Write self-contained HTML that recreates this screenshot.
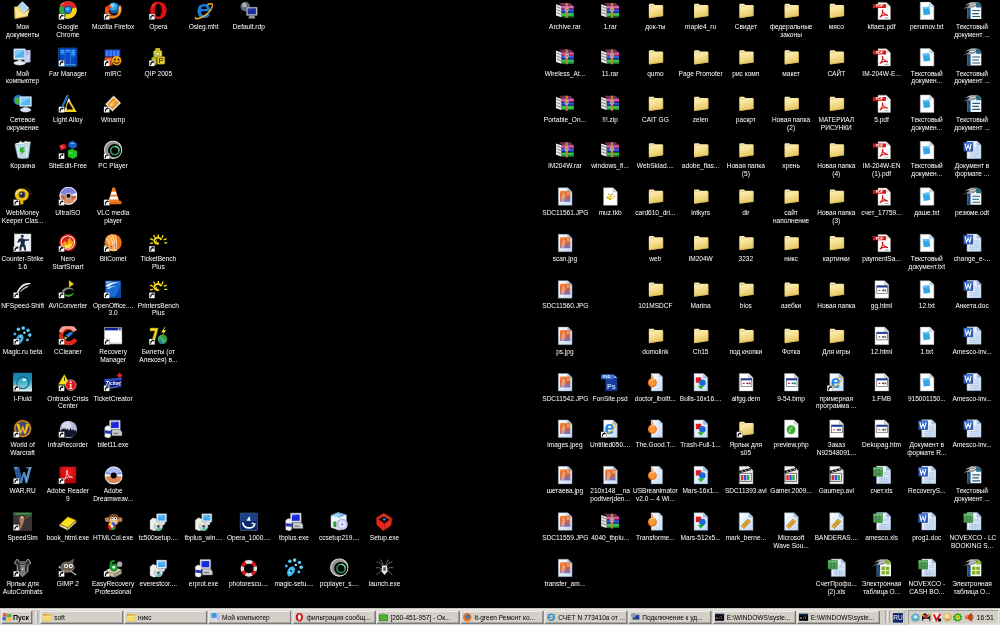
<!DOCTYPE html>
<html><head><meta charset="utf-8"><style>
html,body{margin:0;padding:0;background:#000;width:1000px;height:625px;overflow:hidden}
#d{position:absolute;left:0;top:0;width:1680px;height:1050px;transform:scale(0.595238);transform-origin:0 0;background:#000;font-family:"Liberation Sans",sans-serif}
.ic{position:absolute;display:block}
#labs{position:absolute;left:0;top:0;width:1680px;height:1050px;filter:grayscale(1)}
.lb{position:absolute;width:76px;text-align:center;color:#fff;font-size:11px;line-height:13px;white-space:nowrap}
.bt{position:absolute;top:1026px;height:22px;box-sizing:border-box;background:#d4d0c8;border-top:1px solid #fff;border-left:1px solid #fff;border-right:1px solid #404040;border-bottom:1px solid #404040;box-shadow:inset -1px -1px 0 #808080, inset 1px 1px 0 #e8e6e2;font-size:11px;color:#000;overflow:hidden}
</style></head><body><svg width="0" height="0" style="position:absolute"><defs>
<linearGradient id="gfold" x1="0" y1="0" x2="0.3" y2="1"><stop offset="0" stop-color="#fff4c4"/><stop offset="0.5" stop-color="#f6e296"/><stop offset="1" stop-color="#e6c862"/></linearGradient>
<linearGradient id="gpageb" x1="0" y1="0" x2="1" y2="1"><stop offset="0" stop-color="#ffffff"/><stop offset="1" stop-color="#c4daf4"/></linearGradient>
<linearGradient id="gjpg" x1="0" y1="0" x2="0.2" y2="1"><stop offset="0" stop-color="#f89850"/><stop offset="0.3" stop-color="#e86020"/><stop offset="0.65" stop-color="#d06040"/><stop offset="1" stop-color="#8070b8"/></linearGradient>
<linearGradient id="goo" x1="0" y1="0" x2="1" y2="0"><stop offset="0" stop-color="#1e3a5c"/><stop offset="1" stop-color="#5a7ea8"/></linearGradient>
<linearGradient id="gifl" x1="0" y1="0" x2="0" y2="1"><stop offset="0" stop-color="#1a7ca8"/><stop offset="0.35" stop-color="#1890b8"/><stop offset="0.6" stop-color="#50b8d0"/><stop offset="1" stop-color="#f0f8fc"/></linearGradient>
<radialGradient id="gred" cx="0.5" cy="0.3" r="0.8"><stop offset="0" stop-color="#ff2020"/><stop offset="1" stop-color="#a00000"/></radialGradient>
</defs></svg><div id="d">
<svg class="ic" style="left:22px;top:2px" viewBox="0 0 32 32" width="32" height="32"><path d="M2 9.5L9 8.5l9.5 12L28 12.5l-3.5 13L3 29.5z" fill="#f2d870"/><path d="M4 12l14 10 8-8-3 10L5 27z" fill="#fae890"/><path d="M15.5 0.5L26.7 11.6 18.4 20.5 8.4 8.1z" fill="#c0dcf4" stroke="#e8f4ff" stroke-width="0.8"/><path d="M12 4.5l11 11M10.5 10l8-6.5M14 14.5l8-6.5" stroke="#88b4e0" stroke-width="1"/><path d="M2 9.5L3 29.5 24.5 25.5" fill="none" stroke="#d8a840" stroke-width="1"/></svg>
<svg class="ic" style="left:98px;top:2px" viewBox="0 0 32 32" width="32" height="32"><circle cx="16" cy="14.5" r="14.8" fill="#30a840"/><path d="M16 14.5L3 7A14.8 14.8 0 0 1 30.3 10.5z" fill="#e02828"/><path d="M16 14.5L30.3 10.5A14.8 14.8 0 0 1 11 28.5z" fill="#f8d020"/><path d="M3 7c2-2 4-3 6-3" stroke="#f0a0a0" stroke-width="1.5" fill="none"/><circle cx="16" cy="14.5" r="7" fill="#183060"/><circle cx="16" cy="14.5" r="5.5" fill="#1a88e0"/><circle cx="15.5" cy="13" r="2.5" fill="#50c0ff"/><g><rect x="0.5" y="21.5" width="9.5" height="9.5" fill="#fff" stroke="#606060" stroke-width="0.6"/><path d="M3 29.5c0-3.5 1.5-5.5 4-5.5" stroke="#000" stroke-width="1.8" fill="none"/><path d="M5.8 22.3l3.2 1.5-1.8 2.8z" fill="#000"/></g></svg>
<svg class="ic" style="left:174px;top:2px" viewBox="0 0 32 32" width="32" height="32"><circle cx="18" cy="11.5" r="9.5" fill="#1a5aa8"/><circle cx="16.5" cy="9" r="6.5" fill="#3aa0e0"/><circle cx="15" cy="7" r="3.5" fill="#80d8ff"/><path d="M28 6c3 4 3 10 1 14-3 7-10 10-17 9-6-1-9-5-10-10 3 4 7 6 12 6 7 0 12-4 13-10 0-3 0-6 1-9z" fill="#f08818"/><path d="M27 7c2 3 2 7 1 10-1 3-3 5-5 6 2-3 3-7 2-11z" fill="#f8c040"/><path d="M2 19c0-5 1-9 3-12l1 3c1-3 3-5 6-5l-2 3c2 0 3 1 4 3-3 0-5 2-5 5 0 4 4 7 9 8-6 2-14-1-16-5z" fill="#e84810"/><path d="M4 12c1 4 3 7 7 9" stroke="#f87030" stroke-width="1.5" fill="none"/><g><rect x="0.5" y="21.5" width="9.5" height="9.5" fill="#fff" stroke="#606060" stroke-width="0.6"/><path d="M3 29.5c0-3.5 1.5-5.5 4-5.5" stroke="#000" stroke-width="1.8" fill="none"/><path d="M5.8 22.3l3.2 1.5-1.8 2.8z" fill="#000"/></g></svg>
<svg class="ic" style="left:250px;top:2px" viewBox="0 0 32 32" width="32" height="32"><ellipse cx="16" cy="15.5" rx="14" ry="15" fill="#e01010"/><ellipse cx="16" cy="15.5" rx="6" ry="11.5" fill="#300000"/><ellipse cx="16" cy="15" rx="4" ry="10" fill="#000"/><path d="M6 8c2-5 6-6 7-6-4 2-6 5-6 8z" fill="#ff8080"/><g><rect x="0.5" y="21.5" width="9.5" height="9.5" fill="#fff" stroke="#606060" stroke-width="0.6"/><path d="M3 29.5c0-3.5 1.5-5.5 4-5.5" stroke="#000" stroke-width="1.8" fill="none"/><path d="M5.8 22.3l3.2 1.5-1.8 2.8z" fill="#000"/></g></svg>
<svg class="ic" style="left:326px;top:2px" viewBox="0 0 32 32" width="32" height="32"><text x="16.5" y="29" font-size="44" font-weight="bold" fill="#1a7ad8" text-anchor="middle" font-family="Liberation Sans">e</text><path d="M3 27c-3 3 2 4 10 0 8-4 16-12 18-19 1-4-3-5-9-2" stroke="#e8b020" stroke-width="2.4" fill="none"/></svg>
<svg class="ic" style="left:402px;top:2px" viewBox="0 0 32 32" width="32" height="32"><circle cx="10" cy="9" r="8" fill="#606a78"/><circle cx="8.5" cy="6.5" r="4" fill="#a8b0b8"/><rect x="12" y="10" width="18" height="14" fill="#c0c4c8" stroke="#707880" stroke-width="0.8"/><rect x="14" y="12" width="14" height="10" fill="#1a2c98"/><path d="M15 13l6 0" stroke="#6070d0"/><path d="M17 24h8l2 5H15z" fill="#909aa4"/></svg>
<svg class="ic" style="left:22px;top:80px" viewBox="0 0 32 32" width="32" height="32"><path d="M19 5l10-1v20l-10 2z" fill="#d0d0f0" stroke="#9090c0" stroke-width="0.6"/><path d="M21 8h6M21 11h6" stroke="#8080b0"/><rect x="1" y="2" width="20" height="18" rx="1" fill="#e8f0f8" stroke="#8ab0d0" stroke-width="0.8"/><rect x="3" y="4" width="16" height="13" fill="#50b0f0"/><path d="M3 4h16l-16 11z" fill="#a0d8ff" opacity="0.6"/><path d="M8 20h6l1 3H7z" fill="#c8d0d8"/><ellipse cx="11" cy="26" rx="10" ry="3.5" fill="#e8ecf0" stroke="#a0a8b0" stroke-width="0.6"/></svg>
<svg class="ic" style="left:98px;top:80px" viewBox="0 0 32 32" width="32" height="32"><rect x="0.5" y="0.5" width="31" height="31" fill="#002890" stroke="#30a0e0" stroke-width="1"/><path d="M3 3h7.5v26H3zM12.5 3h7v26h-7zM21.5 3h7.5v26h-7.5z" fill="#0a48c8"/><path d="M3 3h7.5v9H3zM12.5 3h7v6h-7zM21.5 3h7.5v12h-7.5z" fill="#1a70f0"/><path d="M4 5h5M4 8h5M13.5 5h5M22.5 5h5M22.5 8h5M22.5 11h5" stroke="#70d8ff" stroke-width="1.2"/><path d="M3 29h26" stroke="#60c8ff" stroke-width="1.5"/><path d="M11.5 3v26M20.5 3v26" stroke="#40b8ff" stroke-width="1"/><g><rect x="0.5" y="21.5" width="9.5" height="9.5" fill="#fff" stroke="#606060" stroke-width="0.6"/><path d="M3 29.5c0-3.5 1.5-5.5 4-5.5" stroke="#000" stroke-width="1.8" fill="none"/><path d="M5.8 22.3l3.2 1.5-1.8 2.8z" fill="#000"/></g></svg>
<svg class="ic" style="left:174px;top:80px" viewBox="0 0 32 32" width="32" height="32"><path d="M2 3h26v12H2z" fill="#1a50c8"/><path d="M4 5h4v10H4zM10 5h4v10h-4zM16 5h4v10h-4zM22 5h4v10h-4z" fill="#4080ff"/><path d="M2 16h13v14H2z" fill="#e84818"/><path d="M5 19h7v2H5zM7 21h3v8H7z" fill="#ffa060"/><circle cx="22" cy="22" r="8" fill="#f0a010"/><circle cx="19" cy="20" r="1.5" fill="#000"/><circle cx="25" cy="20" r="1.5" fill="#000"/><path d="M17 24c3 3 7 3 10 0" stroke="#000" stroke-width="1.5" fill="none"/><g><rect x="0.5" y="21.5" width="9.5" height="9.5" fill="#fff" stroke="#606060" stroke-width="0.6"/><path d="M3 29.5c0-3.5 1.5-5.5 4-5.5" stroke="#000" stroke-width="1.8" fill="none"/><path d="M5.8 22.3l3.2 1.5-1.8 2.8z" fill="#000"/></g></svg>
<svg class="ic" style="left:250px;top:80px" viewBox="0 0 32 32" width="32" height="32"><rect x="11" y="1" width="8" height="5" fill="#d8d020"/><rect x="8" y="5" width="14" height="11" rx="2" fill="#e8e040" stroke="#808010" stroke-width="0.8"/><circle cx="15" cy="10.5" r="3" fill="#f8f8a0" stroke="#606000"/><rect x="5" y="16" width="8" height="13" fill="#c8c020" stroke="#606010" stroke-width="0.8"/><rect x="14" y="15" width="13" height="13" rx="2" fill="#e8d030" stroke="#706010" stroke-width="0.8"/><path d="M18 18h4a2 2 0 0 1 0 4h-4zM18 18v8" stroke="#503000" stroke-width="1.5" fill="none"/><circle cx="9" cy="13" r="1.5" fill="#40a040"/><g><rect x="0.5" y="21.5" width="9.5" height="9.5" fill="#fff" stroke="#606060" stroke-width="0.6"/><path d="M3 29.5c0-3.5 1.5-5.5 4-5.5" stroke="#000" stroke-width="1.8" fill="none"/><path d="M5.8 22.3l3.2 1.5-1.8 2.8z" fill="#000"/></g></svg>
<svg class="ic" style="left:22px;top:158px" viewBox="0 0 32 32" width="32" height="32"><circle cx="9" cy="10" r="8.5" fill="#2a70c8"/><path d="M3 6c3-2 6 0 8 3 2 4-1 8-4 9-3-1-5-6-4-12z" fill="#40b040"/><path d="M11 3c3 1 5 3 6 6-2 0-4-2-6-6z" fill="#40b040"/><rect x="11" y="4" width="20" height="17" rx="1" fill="#e8f0f8" stroke="#8ab0d0" stroke-width="0.8"/><rect x="13" y="6" width="16" height="13" fill="#50b8f8"/><path d="M13 6h16l-16 10z" fill="#a8e0ff" opacity="0.6"/><path d="M18 21h6v2h-6z" fill="#b0b8c0"/><ellipse cx="21" cy="26.5" rx="9" ry="4" fill="#e0e4f0" stroke="#9098b0" stroke-width="0.8"/></svg>
<svg class="ic" style="left:98px;top:158px" viewBox="0 0 32 32" width="32" height="32"><path d="M14 2l3 0-13 28H1z" fill="#40a8f0"/><path d="M15 2h3l-14 28H1z" fill="#1a70c8"/><path d="M17 7l14 23H9z" fill="#f8d020"/><path d="M17 13l8 13H12z" fill="#000"/><path d="M16 9l2-2 2 4-4 3z" fill="#fff"/><path d="M9 30l4-7h2l-3 7z" fill="#f8f0c0"/><g><rect x="0.5" y="21.5" width="9.5" height="9.5" fill="#fff" stroke="#606060" stroke-width="0.6"/><path d="M3 29.5c0-3.5 1.5-5.5 4-5.5" stroke="#000" stroke-width="1.8" fill="none"/><path d="M5.8 22.3l3.2 1.5-1.8 2.8z" fill="#000"/></g></svg>
<svg class="ic" style="left:174px;top:158px" viewBox="0 0 32 32" width="32" height="32"><path d="M3 17L17 3l12 12-14 14z" fill="#f0f0e8" stroke="#a0a098" stroke-width="0.8"/><path d="M6 17L17 6l9 9-11 11z" fill="#e89020"/><path d="M10 17c4-2 8-5 12-9-2 5-5 7-8 9 3 0 5-1 8-3-3 4-7 6-11 7z" fill="#ffd070"/><g><rect x="0.5" y="21.5" width="9.5" height="9.5" fill="#fff" stroke="#606060" stroke-width="0.6"/><path d="M3 29.5c0-3.5 1.5-5.5 4-5.5" stroke="#000" stroke-width="1.8" fill="none"/><path d="M5.8 22.3l3.2 1.5-1.8 2.8z" fill="#000"/></g></svg>
<svg class="ic" style="left:22px;top:236px" viewBox="0 0 32 32" width="32" height="32"><path d="M3 7l26-3-3 25c-5 2-14 2-18 0z" fill="#c8e8f4" stroke="#88b8d0" stroke-width="0.8" opacity="0.95"/><path d="M4 6l25-3" stroke="#f0f8ff" stroke-width="2.5"/><path d="M9 4l4-3 3 3M17 3l5-2 2 3" fill="#f8f8e8" stroke="#c0c0a0" stroke-width="0.8"/><path d="M12 12h8l-4 5h5l-9 8 3-6h-4z" fill="#20b020"/><path d="M7 10l2 17M24 9l-2 18" stroke="#e8f8ff" stroke-width="1.2"/></svg>
<svg class="ic" style="left:98px;top:236px" viewBox="0 0 32 32" width="32" height="32"><path d="M1 9l9-4 4 7-9 5z" fill="#e01828"/><path d="M5 9l3 3" stroke="#fff" stroke-width="1.3"/><path d="M17 4l7-4 7 5v6l-7 3-7-4z" fill="#1a60d0"/><path d="M21 5h6" stroke="#a0c8ff" stroke-width="1.5"/><path d="M16 17l7-3 9 4v9l-8 4-8-4z" fill="#20c020"/><path d="M18 20l6 2" stroke="#a0ffa0" stroke-width="1"/><g><rect x="0.5" y="21.5" width="9.5" height="9.5" fill="#fff" stroke="#606060" stroke-width="0.6"/><path d="M3 29.5c0-3.5 1.5-5.5 4-5.5" stroke="#000" stroke-width="1.8" fill="none"/><path d="M5.8 22.3l3.2 1.5-1.8 2.8z" fill="#000"/></g></svg>
<svg class="ic" style="left:174px;top:236px" viewBox="0 0 32 32" width="32" height="32"><circle cx="16" cy="15.5" r="14.5" fill="#909090"/><circle cx="16" cy="15.5" r="14.5" fill="none" stroke="#d8d8d8" stroke-width="2"/><circle cx="18.5" cy="17" r="11" fill="#000"/><circle cx="19" cy="17" r="7" fill="none" stroke="#30a060" stroke-width="2.5"/><path d="M19 10a7 7 0 0 1 7 7" stroke="#70e0a0" stroke-width="2" fill="none"/><circle cx="20" cy="18" r="2.5" fill="#000"/><g><rect x="0.5" y="21.5" width="9.5" height="9.5" fill="#fff" stroke="#606060" stroke-width="0.6"/><path d="M3 29.5c0-3.5 1.5-5.5 4-5.5" stroke="#000" stroke-width="1.8" fill="none"/><path d="M5.8 22.3l3.2 1.5-1.8 2.8z" fill="#000"/></g></svg>
<svg class="ic" style="left:22px;top:314px" viewBox="0 0 32 32" width="32" height="32"><path d="M18 4c5 1 9 5 10 10" stroke="#604010" stroke-width="1.5" fill="none"/><path d="M20 1c6 1 10 6 11 12" stroke="#604010" stroke-width="1.2" fill="none"/><path d="M3 13c0-7 6-10 11-10 7 0 12 4 12 10 0 7-5 10-9 10v6h-5v-6c-5-1-9-4-9-10z" fill="#f0c010" stroke="#b08000" stroke-width="0.8"/><path d="M5 12c1-5 5-7 9-7" stroke="#fff0a0" stroke-width="2" fill="none"/><circle cx="15" cy="13" r="5.5" fill="#404050"/><circle cx="15" cy="13" r="3.5" fill="#182030"/><circle cx="13.5" cy="11.5" r="1.5" fill="#e0e8ff"/><g><rect x="0.5" y="21.5" width="9.5" height="9.5" fill="#fff" stroke="#606060" stroke-width="0.6"/><path d="M3 29.5c0-3.5 1.5-5.5 4-5.5" stroke="#000" stroke-width="1.8" fill="none"/><path d="M5.8 22.3l3.2 1.5-1.8 2.8z" fill="#000"/></g></svg>
<svg class="ic" style="left:98px;top:314px" viewBox="0 0 32 32" width="32" height="32"><circle cx="17" cy="15" r="14.5" fill="#f0f0f8"/><path d="M17 15L3 12A14.5 14.5 0 0 1 31 10z" fill="#8080e0"/><path d="M17 15L3 13A14.5 14.5 0 0 0 31 15z" fill="#c86838"/><path d="M17 15L6 23A14.5 14.5 0 0 0 28 24z" fill="#e09060"/><circle cx="17" cy="15" r="14.5" fill="none" stroke="#f0f0ff" stroke-width="1.5"/><circle cx="17" cy="15" r="5" fill="#d0d0d8"/><circle cx="17" cy="15" r="3.5" fill="#000"/><g><rect x="0.5" y="21.5" width="9.5" height="9.5" fill="#fff" stroke="#606060" stroke-width="0.6"/><path d="M3 29.5c0-3.5 1.5-5.5 4-5.5" stroke="#000" stroke-width="1.8" fill="none"/><path d="M5.8 22.3l3.2 1.5-1.8 2.8z" fill="#000"/></g></svg>
<svg class="ic" style="left:174px;top:314px" viewBox="0 0 32 32" width="32" height="32"><path d="M15 1h4l8 24H8z" fill="#f07818"/><path d="M13.5 8h7l1.7 5H11.8zM11 16h12l1.6 5H9.4z" fill="#fff"/><path d="M4 24h26v5H4z" fill="#e86810"/><path d="M4 24h26" stroke="#ffa060" stroke-width="1"/><g><rect x="0.5" y="21.5" width="9.5" height="9.5" fill="#fff" stroke="#606060" stroke-width="0.6"/><path d="M3 29.5c0-3.5 1.5-5.5 4-5.5" stroke="#000" stroke-width="1.8" fill="none"/><path d="M5.8 22.3l3.2 1.5-1.8 2.8z" fill="#000"/></g></svg>
<svg class="ic" style="left:22px;top:392px" viewBox="0 0 32 32" width="32" height="32"><rect x="2" y="1" width="28" height="29" fill="#e8eaee" stroke="#b0b4b8" stroke-width="0.8"/><rect x="2" y="1" width="28" height="29" fill="#fff" opacity="0.3"/><path d="M13 5a2.5 2.5 0 1 1 0 .1zM10 9l5-1 4 2h8v2l-7 1-1 5 2 3 1 8h-3l-2-7-3 2v5h-3v-7l2-5-1-4-3 3-2-1z" fill="#1a2848"/><g><rect x="0.5" y="21.5" width="9.5" height="9.5" fill="#fff" stroke="#606060" stroke-width="0.6"/><path d="M3 29.5c0-3.5 1.5-5.5 4-5.5" stroke="#000" stroke-width="1.8" fill="none"/><path d="M5.8 22.3l3.2 1.5-1.8 2.8z" fill="#000"/></g></svg>
<svg class="ic" style="left:98px;top:392px" viewBox="0 0 32 32" width="32" height="32"><circle cx="16" cy="15.5" r="14.5" fill="#d81818"/><circle cx="16" cy="15.5" r="12" fill="#fff"/><circle cx="16" cy="15.5" r="10.5" fill="#c82020"/><path d="M6 19c2-4 4-6 6-7 0 3 2 4 3 4 0-5 3-8 5-10 0 4 2 6 4 8 1-2 2-3 3-3-1 6-4 12-11 12-5 0-9-2-10-4z" fill="#f8a010"/><path d="M9 22c3-3 5-3 7-2 2-3 5-3 8-1-2 4-5 6-8 6s-6-1-7-3z" fill="#ffe040"/><g><rect x="0.5" y="21.5" width="9.5" height="9.5" fill="#fff" stroke="#606060" stroke-width="0.6"/><path d="M3 29.5c0-3.5 1.5-5.5 4-5.5" stroke="#000" stroke-width="1.8" fill="none"/><path d="M5.8 22.3l3.2 1.5-1.8 2.8z" fill="#000"/></g></svg>
<svg class="ic" style="left:174px;top:392px" viewBox="0 0 32 32" width="32" height="32"><circle cx="16" cy="15.5" r="14.5" fill="#f07010"/><circle cx="13" cy="11" r="9" fill="#ffa040"/><path d="M8 4c6 4 8 12 8 25M13 2c5 5 6 15 5 27M4 8c5 4 7 12 6 20M19 2c3 6 4 15 2 26" stroke="#fff" stroke-width="1.3" fill="none" opacity="0.9"/><path d="M2 20c4 6 12 10 20 8" stroke="#ffd060" stroke-width="3" fill="none"/><g><rect x="0.5" y="21.5" width="9.5" height="9.5" fill="#fff" stroke="#606060" stroke-width="0.6"/><path d="M3 29.5c0-3.5 1.5-5.5 4-5.5" stroke="#000" stroke-width="1.8" fill="none"/><path d="M5.8 22.3l3.2 1.5-1.8 2.8z" fill="#000"/></g></svg>
<svg class="ic" style="left:250px;top:392px" viewBox="0 0 32 32" width="32" height="32"><path d="M17 17a6 5 0 1 1 4-6" stroke="#f8e020" stroke-width="3.2" fill="none"/><path d="M17 17c-3 0-5-2-4-5" stroke="#e8c000" stroke-width="2" fill="none"/><path d="M16 2v5M24 3l-2 5M30 9l-5 2M31 16h-5M8 3l2 4M2 9l5 2M2 17l5-1" stroke="#f8e020" stroke-width="2.2"/><g><rect x="0.5" y="21.5" width="9.5" height="9.5" fill="#fff" stroke="#606060" stroke-width="0.6"/><path d="M3 29.5c0-3.5 1.5-5.5 4-5.5" stroke="#000" stroke-width="1.8" fill="none"/><path d="M5.8 22.3l3.2 1.5-1.8 2.8z" fill="#000"/></g></svg>
<svg class="ic" style="left:22px;top:470px" viewBox="0 0 32 32" width="32" height="32"><path d="M4 26c3-8 8-16 14-19 4-2 8-2 12-1l-3 2c-5 0-9 2-13 6-3 3-5 8-6 12z" fill="#f0f0f0"/><path d="M12 20c3-5 8-9 14-10l-2 3c-4 1-8 4-11 8z" fill="#c8c8c8"/><path d="M4 26l3 3 3-3" stroke="#d0d0d0" stroke-width="1.5" fill="none"/><g><rect x="0.5" y="21.5" width="9.5" height="9.5" fill="#fff" stroke="#606060" stroke-width="0.6"/><path d="M3 29.5c0-3.5 1.5-5.5 4-5.5" stroke="#000" stroke-width="1.8" fill="none"/><path d="M5.8 22.3l3.2 1.5-1.8 2.8z" fill="#000"/></g></svg>
<svg class="ic" style="left:98px;top:470px" viewBox="0 0 32 32" width="32" height="32"><path d="M18 1l8 6-8 6z" fill="#f8d020" stroke="#a08000" stroke-width="0.6"/><path d="M6 22c0-6 6-10 12-9 4 0 7 2 8 5-3-2-6-3-10-2-4 1-6 3-7 6z" fill="#909090" stroke="#505050" stroke-width="0.6"/><path d="M10 25c2 3 6 4 10 3 4-1 6-4 6-7-2 3-5 4-8 4-3 0-6-1-8 0z" fill="#40b030"/><g><rect x="0.5" y="21.5" width="9.5" height="9.5" fill="#fff" stroke="#606060" stroke-width="0.6"/><path d="M3 29.5c0-3.5 1.5-5.5 4-5.5" stroke="#000" stroke-width="1.8" fill="none"/><path d="M5.8 22.3l3.2 1.5-1.8 2.8z" fill="#000"/></g></svg>
<svg class="ic" style="left:174px;top:470px" viewBox="0 0 32 32" width="32" height="32"><rect x="3" y="2" width="26" height="28" fill="#1a6ad0" stroke="#0a4090" stroke-width="0.8"/><path d="M29 2v28H17c6-4 10-14 12-28z" fill="#0a4aa8"/><path d="M3 10c7-6 15-7 24-5-7 0-14 2-19 7" fill="#e8f4ff"/><path d="M5 15c5-4 11-5 17-4-5 0-10 2-13 5" fill="#b0d8ff"/><path d="M3 4c4-2 9-2 12-1-3 0-7 1-9 3" fill="#c8e4ff"/><g><rect x="0.5" y="21.5" width="9.5" height="9.5" fill="#fff" stroke="#606060" stroke-width="0.6"/><path d="M3 29.5c0-3.5 1.5-5.5 4-5.5" stroke="#000" stroke-width="1.8" fill="none"/><path d="M5.8 22.3l3.2 1.5-1.8 2.8z" fill="#000"/></g></svg>
<svg class="ic" style="left:250px;top:470px" viewBox="0 0 32 32" width="32" height="32"><path d="M17 17a6 5 0 1 1 4-6" stroke="#f8e020" stroke-width="3.2" fill="none"/><path d="M17 17c-3 0-5-2-4-5" stroke="#e8c000" stroke-width="2" fill="none"/><path d="M16 2v5M24 3l-2 5M30 9l-5 2M31 16h-5M8 3l2 4M2 9l5 2M2 17l5-1" stroke="#f8e020" stroke-width="2.2"/><g><rect x="0.5" y="21.5" width="9.5" height="9.5" fill="#fff" stroke="#606060" stroke-width="0.6"/><path d="M3 29.5c0-3.5 1.5-5.5 4-5.5" stroke="#000" stroke-width="1.8" fill="none"/><path d="M5.8 22.3l3.2 1.5-1.8 2.8z" fill="#000"/></g></svg>
<svg class="ic" style="left:22px;top:548px" viewBox="0 0 32 32" width="32" height="32"><path d="M6 30c-3-4-2-10 2-14 3-3 7-3 9 0 2 4-1 10-5 13-2 1-4 2-6 1z" fill="#40b8e8"/><path d="M8 26c0-3 2-6 5-8" stroke="#e0f8ff" stroke-width="1.5" fill="none"/><circle cx="11" cy="21" r="2" fill="#0a4080"/><circle cx="9" cy="5" r="3" fill="#50c8f0"/><circle cx="17" cy="3" r="3" fill="#70d8ff"/><circle cx="25" cy="7" r="3" fill="#50c0f0"/><circle cx="28" cy="15" r="3" fill="#70d0ff"/><circle cx="24" cy="23" r="2.5" fill="#50c0f0"/><circle cx="3" cy="13" r="2.5" fill="#40b0e0"/><circle cx="19" cy="11" r="2" fill="#a0e8ff"/><g><rect x="0.5" y="21.5" width="9.5" height="9.5" fill="#fff" stroke="#606060" stroke-width="0.6"/><path d="M3 29.5c0-3.5 1.5-5.5 4-5.5" stroke="#000" stroke-width="1.8" fill="none"/><path d="M5.8 22.3l3.2 1.5-1.8 2.8z" fill="#000"/></g></svg>
<svg class="ic" style="left:98px;top:548px" viewBox="0 0 32 32" width="32" height="32"><path d="M28 8A13 13 0 1 0 29 22" stroke="#e02818" stroke-width="7" fill="none"/><path d="M28 8A13 13 0 0 0 4 10" stroke="#f0a090" stroke-width="7" fill="none"/><path d="M12 15l10-6 3 3-9 8z" fill="#2a7ad8"/><path d="M10 17l5 3-4 3z" fill="#f0d020"/><g><rect x="0.5" y="21.5" width="9.5" height="9.5" fill="#fff" stroke="#606060" stroke-width="0.6"/><path d="M3 29.5c0-3.5 1.5-5.5 4-5.5" stroke="#000" stroke-width="1.8" fill="none"/><path d="M5.8 22.3l3.2 1.5-1.8 2.8z" fill="#000"/></g></svg>
<svg class="ic" style="left:174px;top:548px" viewBox="0 0 32 32" width="32" height="32"><rect x="1" y="2" width="30" height="28" fill="#fff" stroke="#707070" stroke-width="1"/><rect x="2" y="3" width="28" height="4" fill="#0a1c90"/><rect x="24" y="4" width="2" height="2" fill="#fff"/><rect x="27" y="4" width="2" height="2" fill="#fff"/><path d="M2 28h28" stroke="#c0c0c0"/><g><rect x="0.5" y="21.5" width="9.5" height="9.5" fill="#fff" stroke="#606060" stroke-width="0.6"/><path d="M3 29.5c0-3.5 1.5-5.5 4-5.5" stroke="#000" stroke-width="1.8" fill="none"/><path d="M5.8 22.3l3.2 1.5-1.8 2.8z" fill="#000"/></g></svg>
<svg class="ic" style="left:250px;top:548px" viewBox="0 0 32 32" width="32" height="32"><path d="M2 3h14l-6 22h-5l5-17H2z" fill="#e8d828" stroke="#806800" stroke-width="0.8"/><circle cx="23" cy="22" r="8" fill="#30a050"/><path d="M18 18c2 0 4 2 4 4s2 3 5 2M20 28c1-2 3-3 5-2" stroke="#80d090" stroke-width="1.5" fill="none"/><circle cx="20" cy="26" r="3" fill="#3070d0"/><path d="M27 1l-6 9h4l-3 7 7-10h-4l3-6z" fill="#f8f020"/><g><rect x="0.5" y="21.5" width="9.5" height="9.5" fill="#fff" stroke="#606060" stroke-width="0.6"/><path d="M3 29.5c0-3.5 1.5-5.5 4-5.5" stroke="#000" stroke-width="1.8" fill="none"/><path d="M5.8 22.3l3.2 1.5-1.8 2.8z" fill="#000"/></g></svg>
<svg class="ic" style="left:22px;top:626px" viewBox="0 0 32 32" width="32" height="32"><rect x="0" y="0" width="32" height="32" fill="url(#gifl)"/><circle cx="16.5" cy="17" r="10" fill="#60c0d8" opacity="0.35"/><circle cx="16.5" cy="17" r="10" fill="none" stroke="#0a5878" stroke-width="1.8"/><ellipse cx="19" cy="12" rx="3.5" ry="2.2" fill="#f0ffff"/><g><rect x="0.5" y="21.5" width="9.5" height="9.5" fill="#fff" stroke="#606060" stroke-width="0.6"/><path d="M3 29.5c0-3.5 1.5-5.5 4-5.5" stroke="#000" stroke-width="1.8" fill="none"/><path d="M5.8 22.3l3.2 1.5-1.8 2.8z" fill="#000"/></g></svg>
<svg class="ic" style="left:98px;top:626px" viewBox="0 0 32 32" width="32" height="32"><path d="M10 3l10 17H0z" fill="#f8e010" stroke="#807000" stroke-width="0.8"/><path d="M9.5 8h1.5l-.3 6h-1z" fill="#000"/><circle cx="21" cy="21" r="9" fill="#e01818"/><circle cx="21" cy="21" r="9" fill="none" stroke="#fff" stroke-width="0.8"/><circle cx="21" cy="16" r="1.7" fill="#fff"/><path d="M19 19h3v7h1.5v1.5h-5V26h1.5v-5.5H19z" fill="#fff"/><g><rect x="0.5" y="21.5" width="9.5" height="9.5" fill="#fff" stroke="#606060" stroke-width="0.6"/><path d="M3 29.5c0-3.5 1.5-5.5 4-5.5" stroke="#000" stroke-width="1.8" fill="none"/><path d="M5.8 22.3l3.2 1.5-1.8 2.8z" fill="#000"/></g></svg>
<svg class="ic" style="left:174px;top:626px" viewBox="0 0 32 32" width="32" height="32"><path d="M1 11l30-3v17l-30 3z" fill="#0a1a80"/><path d="M1 11l30-3v4l-30 3z" fill="#3048c0"/><text x="16" y="21.5" font-size="9" fill="#fff" text-anchor="middle" font-family="Liberation Sans" font-weight="bold" font-style="italic">Ticket</text><path d="M8 26c7 0 14-2 21-5" stroke="#c0c8f0" stroke-width="1" fill="none"/><path d="M22 5l5-5 5 5-5 4z" fill="#e02020"/><g><rect x="0.5" y="21.5" width="9.5" height="9.5" fill="#fff" stroke="#606060" stroke-width="0.6"/><path d="M3 29.5c0-3.5 1.5-5.5 4-5.5" stroke="#000" stroke-width="1.8" fill="none"/><path d="M5.8 22.3l3.2 1.5-1.8 2.8z" fill="#000"/></g></svg>
<svg class="ic" style="left:22px;top:704px" viewBox="0 0 32 32" width="32" height="32"><circle cx="16" cy="16" r="14.5" fill="#e0a030"/><circle cx="16" cy="16" r="14.5" fill="none" stroke="#904810" stroke-width="1"/><circle cx="16" cy="16" r="11.5" fill="#2a4a80"/><circle cx="16" cy="16" r="11.5" fill="none" stroke="#603010" stroke-width="1"/><path d="M5 8h6l2 11 2.5-8h1.5l2.5 8 2-11h6l-6 17h-3.5l-2-7-2 7H11z" fill="#f8c030" stroke="#804000" stroke-width="0.8"/><g><rect x="0.5" y="21.5" width="9.5" height="9.5" fill="#fff" stroke="#606060" stroke-width="0.6"/><path d="M3 29.5c0-3.5 1.5-5.5 4-5.5" stroke="#000" stroke-width="1.8" fill="none"/><path d="M5.8 22.3l3.2 1.5-1.8 2.8z" fill="#000"/></g></svg>
<svg class="ic" style="left:98px;top:704px" viewBox="0 0 32 32" width="32" height="32"><circle cx="17" cy="17.5" r="14.5" fill="#b8b8e0"/><circle cx="14" cy="12" r="8" fill="#e0e0f8" opacity="0.8"/><path d="M3 20c2-3 4-2 5-5l2 3 1-4 2 4 3-2 2 4 2-6 2 5 3-2 2 3 2-2 2 4v4c-5 6-21 6-28 0z" fill="#141828"/><g><rect x="0.5" y="21.5" width="9.5" height="9.5" fill="#fff" stroke="#606060" stroke-width="0.6"/><path d="M3 29.5c0-3.5 1.5-5.5 4-5.5" stroke="#000" stroke-width="1.8" fill="none"/><path d="M5.8 22.3l3.2 1.5-1.8 2.8z" fill="#000"/></g></svg>
<svg class="ic" style="left:174px;top:704px" viewBox="0 0 32 32" width="32" height="32"><rect x="10" y="2" width="18" height="16" rx="1" fill="#e0e4e8" stroke="#8890a0" stroke-width="0.8"/><rect x="12.5" y="4.5" width="13" height="10.5" fill="#1a28d8"/><path d="M13 6h6" stroke="#6878f0"/><path d="M14 18h14l3 4v6H14z" fill="#c8ccd0" stroke="#707880" stroke-width="0.8"/><path d="M17 24h8" stroke="#505860" stroke-width="1.5"/><path d="M2 14l4-3 6 1v18l-4 2-6-2z" fill="#f4f4f4" stroke="#909090" stroke-width="0.6"/><path d="M2 19l10 1v5l-10-1z" fill="#2030c0"/></svg>
<svg class="ic" style="left:22px;top:782px" viewBox="0 0 32 32" width="32" height="32"><path d="M1 3h9l4 17 3-9h3l3 9 4-17h4l-7 27h-3l-3-12-3 12h-4z" fill="#4a88c0"/><path d="M1 3h9l4 17-1 4-2 6h-3z" fill="#2a5a98"/><path d="M2 4h6M22 4h9" stroke="#c0e0ff" stroke-width="1.2"/><path d="M27 5l-6 23" stroke="#a0d0ff" stroke-width="1" fill="none"/><g><rect x="0.5" y="21.5" width="9.5" height="9.5" fill="#fff" stroke="#606060" stroke-width="0.6"/><path d="M3 29.5c0-3.5 1.5-5.5 4-5.5" stroke="#000" stroke-width="1.8" fill="none"/><path d="M5.8 22.3l3.2 1.5-1.8 2.8z" fill="#000"/></g></svg>
<svg class="ic" style="left:98px;top:782px" viewBox="0 0 32 32" width="32" height="32"><rect x="2" y="2" width="28" height="28" fill="url(#gred)"/><path d="M9 25c4-5 7-12 6-17-3 1-1 10 9 12-7-2-12 1-15 5z" fill="none" stroke="#ffd8d8" stroke-width="1.5"/><g><rect x="0.5" y="21.5" width="9.5" height="9.5" fill="#fff" stroke="#606060" stroke-width="0.6"/><path d="M3 29.5c0-3.5 1.5-5.5 4-5.5" stroke="#000" stroke-width="1.8" fill="none"/><path d="M5.8 22.3l3.2 1.5-1.8 2.8z" fill="#000"/></g></svg>
<svg class="ic" style="left:174px;top:782px" viewBox="0 0 32 32" width="32" height="32"><circle cx="17" cy="17" r="14.5" fill="#f0f4fc"/><path d="M17 17L3 14A14.5 14.5 0 0 1 31 14z" fill="#7890e0"/><path d="M17 17L4 10A14.5 14.5 0 0 1 30 10z" fill="#a8b8f0"/><path d="M17 17L3 19A14.5 14.5 0 0 0 31 19z" fill="#d88850"/><circle cx="17" cy="17" r="14.5" fill="none" stroke="#fff" stroke-width="1.2"/><circle cx="17" cy="17" r="5" fill="#000"/></svg>
<svg class="ic" style="left:22px;top:860px" viewBox="0 0 32 32" width="32" height="32"><rect x="0" y="1" width="32" height="31" fill="#3a3434"/><rect x="0" y="1" width="32" height="5" fill="#2a6a30"/><path d="M4 3h24" stroke="#d0f0d0" stroke-width="1" opacity="0.6"/><path d="M12 8c3-2 7 0 7 4 0 5-3 8-4 12l-3 6h-3l3-10c-2-4-2-9 0-12z" fill="#b07860"/><path d="M13 8c2-1 4 0 5 2-2 1-4 1-5-2z" fill="#f0e090"/><path d="M20 10l8-3" stroke="#909090"/><g><rect x="0.5" y="21.5" width="9.5" height="9.5" fill="#fff" stroke="#606060" stroke-width="0.6"/><path d="M3 29.5c0-3.5 1.5-5.5 4-5.5" stroke="#000" stroke-width="1.8" fill="none"/><path d="M5.8 22.3l3.2 1.5-1.8 2.8z" fill="#000"/></g></svg>
<svg class="ic" style="left:98px;top:860px" viewBox="0 0 32 32" width="32" height="32"><path d="M2 21L16 8l14 6-14 13z" fill="#f0d000" stroke="#6a5000" stroke-width="1"/><path d="M5 20L16 10l11 5-11 10z" fill="#f8e020"/><path d="M2 21v3l14 7v-4z" fill="#fff8e0" stroke="#6a5000" stroke-width="0.8"/><path d="M16 27v4l14-13v-4z" fill="#e0d0a0" stroke="#6a5000" stroke-width="0.8"/></svg>
<svg class="ic" style="left:174px;top:860px" viewBox="0 0 32 32" width="32" height="32"><circle cx="17" cy="13" r="10" fill="#7a4a20"/><circle cx="6" cy="13" r="4" fill="#c08050"/><circle cx="28" cy="13" r="4" fill="#c08050"/><ellipse cx="17" cy="16" rx="7" ry="6" fill="#e8c090"/><circle cx="14" cy="11" r="2.5" fill="#fff"/><circle cx="20" cy="11" r="2.5" fill="#fff"/><circle cx="14" cy="11" r="1.2" fill="#000"/><circle cx="20" cy="11" r="1.2" fill="#000"/><circle cx="14" cy="24" r="6.5" fill="#e82020"/><path d="M14 24L8 21A6.5 6.5 0 0 1 14 17.5z" fill="#f0e020"/><path d="M14 24l6-3a6.5 6.5 0 0 0-6-3.5z" fill="#2070e0"/><path d="M14 24l6 3a6.5 6.5 0 0 1-6 3.5z" fill="#20b040"/><circle cx="14" cy="24" r="2" fill="#fff"/></svg>
<svg class="ic" style="left:250px;top:860px" viewBox="0 0 32 32" width="32" height="32"><path d="M2 14l5-4 7 2v18l-5 2-7-3z" fill="#eeeeee" stroke="#a0a0a0" stroke-width="0.6"/><rect x="13" y="3" width="17" height="14" rx="1" fill="#e8ecf0" stroke="#7888a0" stroke-width="0.8"/><rect x="15.5" y="5.5" width="12" height="9" fill="#38a8f0"/><path d="M16 7c3 0 6 1 10 4" stroke="#90d8ff" stroke-width="1.2" fill="none"/><circle cx="16" cy="24" r="7.5" fill="#c8d4e0" stroke="#8898a8" stroke-width="0.6"/><path d="M16 24L10 19A7.5 7.5 0 0 1 16 16.5z" fill="#f0f4a0"/><path d="M16 24L22 29A7.5 7.5 0 0 1 13 31z" fill="#60c0a0"/><circle cx="16" cy="24" r="2" fill="#404040"/><path d="M18 17h10l-2 5h-6z" fill="#d8dce0"/></svg>
<svg class="ic" style="left:326px;top:860px" viewBox="0 0 32 32" width="32" height="32"><path d="M2 14l5-4 7 2v18l-5 2-7-3z" fill="#eeeeee" stroke="#a0a0a0" stroke-width="0.6"/><rect x="13" y="3" width="17" height="14" rx="1" fill="#e8ecf0" stroke="#7888a0" stroke-width="0.8"/><rect x="15.5" y="5.5" width="12" height="9" fill="#38a8f0"/><path d="M16 7c3 0 6 1 10 4" stroke="#90d8ff" stroke-width="1.2" fill="none"/><circle cx="16" cy="24" r="7.5" fill="#c8d4e0" stroke="#8898a8" stroke-width="0.6"/><path d="M16 24L10 19A7.5 7.5 0 0 1 16 16.5z" fill="#f0f4a0"/><path d="M16 24L22 29A7.5 7.5 0 0 1 13 31z" fill="#60c0a0"/><circle cx="16" cy="24" r="2" fill="#404040"/><path d="M18 17h10l-2 5h-6z" fill="#d8dce0"/></svg>
<svg class="ic" style="left:402px;top:860px" viewBox="0 0 32 32" width="32" height="32"><rect x="1.5" y="2" width="29" height="29" rx="1.5" fill="#0a2a6a" stroke="#6080b0" stroke-width="1"/><rect x="3" y="3.5" width="26" height="12" fill="#1a4088"/><path d="M6 18c0 6 5 9 10 9s10-3 10-8" stroke="#fff" stroke-width="3" fill="none"/><path d="M17 7l-5 8h7z" fill="#fff"/><path d="M23 17l2 4-5-1z" fill="#fff"/></svg>
<svg class="ic" style="left:478px;top:860px" viewBox="0 0 32 32" width="32" height="32"><rect x="10" y="2" width="18" height="16" rx="1" fill="#e0e4e8" stroke="#8890a0" stroke-width="0.8"/><rect x="12.5" y="4.5" width="13" height="10.5" fill="#1a28d8"/><path d="M13 6h6" stroke="#6878f0"/><path d="M14 18h14l3 4v6H14z" fill="#c8ccd0" stroke="#707880" stroke-width="0.8"/><path d="M17 24h8" stroke="#505860" stroke-width="1.5"/><path d="M2 14l4-3 6 1v18l-4 2-6-2z" fill="#f4f4f4" stroke="#909090" stroke-width="0.6"/><path d="M2 19l10 1v5l-10-1z" fill="#2030c0"/></svg>
<svg class="ic" style="left:554px;top:860px" viewBox="0 0 32 32" width="32" height="32"><path d="M2 6l12-5 14 4v22l-12 4-14-5z" fill="#f0f4f8" stroke="#90a0b0" stroke-width="0.8"/><path d="M2 6l12-5 14 4-12 5z" fill="#78b8e8"/><path d="M4 8l10-4M8 9l10-4" stroke="#e0f0ff" stroke-width="1.2"/><path d="M6 16h5v10l-5-1z" fill="#30a030"/><circle cx="21" cy="21" r="9" fill="#d0d0f0" stroke="#8080c0" stroke-width="0.8"/><circle cx="21" cy="21" r="5" fill="#e8e8ff"/><circle cx="21" cy="21" r="1.8" fill="#8080b0"/></svg>
<svg class="ic" style="left:630px;top:860px" viewBox="0 0 32 32" width="32" height="32"><path d="M15 2l14 9-2 12-13 9L3 22 2 10z" fill="#e82818" stroke="#801008" stroke-width="0.8"/><path d="M15 5l11 7-10 8L5 12z" fill="#200808"/><path d="M15 5l11 7-1 1L15 7 6 12l-1 0z" fill="#ff6040"/><path d="M5 12l11 8v11M16 20l10-8" stroke="#a01808" stroke-width="1" fill="none"/><circle cx="15.5" cy="12.5" r="2" fill="#3090f8"/></svg>
<svg class="ic" style="left:22px;top:938px" viewBox="0 0 32 32" width="32" height="32"><path d="M7 1l4 5h10l4-5 5 7-5 4v10l-9 9-9-9V12L2 8z" fill="#303030" stroke="#c8c8c8" stroke-width="1.3"/><path d="M11 9h10M11 12h10" stroke="#a0a0a0" stroke-width="1.2"/><path d="M13 14h6v12l-3 3-3-3z" fill="#707070" stroke="#d0d0d0" stroke-width="0.8"/><path d="M8 15v6l4 4M24 15v6l-4 4" stroke="#b0b0b0" stroke-width="1" fill="none"/><circle cx="16" cy="18" r="1.5" fill="#e0e0e0"/><g><rect x="0.5" y="21.5" width="9.5" height="9.5" fill="#fff" stroke="#606060" stroke-width="0.6"/><path d="M3 29.5c0-3.5 1.5-5.5 4-5.5" stroke="#000" stroke-width="1.8" fill="none"/><path d="M5.8 22.3l3.2 1.5-1.8 2.8z" fill="#000"/></g></svg>
<svg class="ic" style="left:98px;top:938px" viewBox="0 0 32 32" width="32" height="32"><path d="M4 12c2-5 8-7 14-6l8-5-2 8c4 3 4 9 0 12-5 4-14 4-18 0-2-2-3-6-2-9z" fill="#6a6050" stroke="#a09890" stroke-width="0.6"/><circle cx="13" cy="13" r="3.5" fill="#fff"/><circle cx="21" cy="13" r="3.5" fill="#fff"/><circle cx="13" cy="13" r="1.5" fill="#000"/><circle cx="21" cy="13" r="1.5" fill="#000"/><circle cx="2" cy="15" r="1.5" fill="#e0e0e0"/><path d="M20 21l10 7" stroke="#d0d0d0" stroke-width="1.8"/><path d="M8 20c3 2 7 2 10 0" stroke="#c0a080" stroke-width="1.2" fill="none"/><g><rect x="0.5" y="21.5" width="9.5" height="9.5" fill="#fff" stroke="#606060" stroke-width="0.6"/><path d="M3 29.5c0-3.5 1.5-5.5 4-5.5" stroke="#000" stroke-width="1.8" fill="none"/><path d="M5.8 22.3l3.2 1.5-1.8 2.8z" fill="#000"/></g></svg>
<svg class="ic" style="left:174px;top:938px" viewBox="0 0 32 32" width="32" height="32"><path d="M4 20l12-6 14 5-12 7z" fill="#e8e0c0"/><path d="M4 20v7l14 5v-6z" fill="#c8c0a0" stroke="#807858" stroke-width="0.6"/><path d="M18 26v6l12-6v-7z" fill="#a8a080" stroke="#807858" stroke-width="0.6"/><path d="M18 3c-5-1-8 3-8 9s3 10 7 10 7-3 7-7-3-6-6-6c-2 0-3 1-4 2 0-4 2-6 5-5z" fill="#20a030" stroke="#0a6018" stroke-width="0.8"/><circle cx="17" cy="15" r="2.5" fill="#e0ffe0"/><circle cx="27" cy="10" r="4.5" fill="#b0b0b8" stroke="#707078" stroke-width="0.8"/><g><rect x="0.5" y="21.5" width="9.5" height="9.5" fill="#fff" stroke="#606060" stroke-width="0.6"/><path d="M3 29.5c0-3.5 1.5-5.5 4-5.5" stroke="#000" stroke-width="1.8" fill="none"/><path d="M5.8 22.3l3.2 1.5-1.8 2.8z" fill="#000"/></g></svg>
<svg class="ic" style="left:250px;top:938px" viewBox="0 0 32 32" width="32" height="32"><path d="M2 14l5-4 7 2v18l-5 2-7-3z" fill="#eeeeee" stroke="#a0a0a0" stroke-width="0.6"/><rect x="13" y="3" width="17" height="14" rx="1" fill="#e8ecf0" stroke="#7888a0" stroke-width="0.8"/><rect x="15.5" y="5.5" width="12" height="9" fill="#38a8f0"/><path d="M16 7c3 0 6 1 10 4" stroke="#90d8ff" stroke-width="1.2" fill="none"/><circle cx="16" cy="24" r="7.5" fill="#c8d4e0" stroke="#8898a8" stroke-width="0.6"/><path d="M16 24L10 19A7.5 7.5 0 0 1 16 16.5z" fill="#f0f4a0"/><path d="M16 24L22 29A7.5 7.5 0 0 1 13 31z" fill="#60c0a0"/><circle cx="16" cy="24" r="2" fill="#404040"/><path d="M18 17h10l-2 5h-6z" fill="#d8dce0"/></svg>
<svg class="ic" style="left:326px;top:938px" viewBox="0 0 32 32" width="32" height="32"><rect x="10" y="2" width="18" height="16" rx="1" fill="#e0e4e8" stroke="#8890a0" stroke-width="0.8"/><rect x="12.5" y="4.5" width="13" height="10.5" fill="#1a28d8"/><path d="M13 6h6" stroke="#6878f0"/><path d="M14 18h14l3 4v6H14z" fill="#c8ccd0" stroke="#707880" stroke-width="0.8"/><path d="M17 24h8" stroke="#505860" stroke-width="1.5"/><path d="M2 14l4-3 6 1v18l-4 2-6-2z" fill="#f4f4f4" stroke="#909090" stroke-width="0.6"/><path d="M2 19l10 1v5l-10-1z" fill="#2030c0"/></svg>
<svg class="ic" style="left:402px;top:938px" viewBox="0 0 32 32" width="32" height="32"><circle cx="16" cy="17" r="11.5" fill="none" stroke="#d81818" stroke-width="7"/><path d="M16 17L9 4A14 14 0 0 1 23 4z" fill="#e0e0e0"/><path d="M16 17L2 13A14 14 0 0 0 3 22z" fill="#e0e0e0"/><path d="M16 17L29 22A14 14 0 0 0 30 13z" fill="#e0e0e0"/><path d="M16 17L9 30A14 14 0 0 0 23 30z" fill="#e0e0e0"/><circle cx="16" cy="17" r="8" fill="#000"/><circle cx="16" cy="17" r="15" fill="none" stroke="#000" stroke-width="2"/></svg>
<svg class="ic" style="left:478px;top:938px" viewBox="0 0 32 32" width="32" height="32"><path d="M6 30c-3-4-2-10 2-14 3-3 7-3 9 0 2 4-1 10-5 13-2 1-4 2-6 1z" fill="#40b8e8"/><path d="M8 26c0-3 2-6 5-8" stroke="#e0f8ff" stroke-width="1.5" fill="none"/><circle cx="11" cy="21" r="2" fill="#0a4080"/><circle cx="9" cy="5" r="3" fill="#50c8f0"/><circle cx="17" cy="3" r="3" fill="#70d8ff"/><circle cx="25" cy="7" r="3" fill="#50c0f0"/><circle cx="28" cy="15" r="3" fill="#70d0ff"/><circle cx="24" cy="23" r="2.5" fill="#50c0f0"/><circle cx="3" cy="13" r="2.5" fill="#40b0e0"/><circle cx="19" cy="11" r="2" fill="#a0e8ff"/></svg>
<svg class="ic" style="left:554px;top:938px" viewBox="0 0 32 32" width="32" height="32"><circle cx="16" cy="15.5" r="14.5" fill="#909090"/><circle cx="16" cy="15.5" r="14.5" fill="none" stroke="#d8d8d8" stroke-width="2"/><circle cx="18.5" cy="17" r="11" fill="#000"/><circle cx="19" cy="17" r="7" fill="none" stroke="#30a060" stroke-width="2.5"/><path d="M19 10a7 7 0 0 1 7 7" stroke="#70e0a0" stroke-width="2" fill="none"/><circle cx="20" cy="18" r="2.5" fill="#000"/></svg>
<svg class="ic" style="left:630px;top:938px" viewBox="0 0 32 32" width="32" height="32"><path d="M3 6c4 0 8 4 10 8M29 6c-4 0-8 4-10 8M1 16c4-1 8 0 11 2M31 16c-4-1-8 0-11 2M3 28c3-4 6-7 9-8M29 28c-3-4-6-7-9-8M9 2c2 3 4 6 5 9M23 2c-2 3-4 6-5 9" stroke="#b0b0b0" stroke-width="1" fill="none"/><path d="M12 12h8l1 10-5 6-5-6z" fill="#e8e8e8"/><path d="M14 15h4v6h-4z" fill="#505050"/></svg>
<svg class="ic" style="left:933px;top:2px" viewBox="0 0 32 32" width="32" height="32"><path d="M6 3h19l6 5H11z" fill="#7a3050"/><path d="M10 8h21v5.5H10z" fill="#e060b8"/><path d="M10 11.5h21v2H10z" fill="#902070"/><path d="M10 14h21v5.5H10z" fill="#3858e0"/><path d="M10 17.5h21v2H10z" fill="#182890"/><path d="M10 20h21v7H10z" fill="#38c048"/><path d="M10 25h21v2H10z" fill="#107020"/><path d="M1 5l9 3v19l-9-3z" fill="#e8e8e8"/><path d="M2 9l7 3M2 14l7 3M2 19l7 3" stroke="#606060" stroke-width="1.3"/><path d="M17 3h4v25h-4z" fill="#b08848"/><circle cx="19" cy="14" r="3" fill="none" stroke="#d0d0d0" stroke-width="1.4"/></svg>
<svg class="ic" style="left:1009px;top:2px" viewBox="0 0 32 32" width="32" height="32"><path d="M6 3h19l6 5H11z" fill="#7a3050"/><path d="M10 8h21v5.5H10z" fill="#e060b8"/><path d="M10 11.5h21v2H10z" fill="#902070"/><path d="M10 14h21v5.5H10z" fill="#3858e0"/><path d="M10 17.5h21v2H10z" fill="#182890"/><path d="M10 20h21v7H10z" fill="#38c048"/><path d="M10 25h21v2H10z" fill="#107020"/><path d="M1 5l9 3v19l-9-3z" fill="#e8e8e8"/><path d="M2 9l7 3M2 14l7 3M2 19l7 3" stroke="#606060" stroke-width="1.3"/><path d="M17 3h4v25h-4z" fill="#b08848"/><circle cx="19" cy="14" r="3" fill="none" stroke="#d0d0d0" stroke-width="1.4"/></svg>
<svg class="ic" style="left:1085px;top:2px" viewBox="0 0 32 32" width="32" height="32"><path d="M5 6.5L6 4.5h7l2 2h13l1 1.5v17l-23 3.5-1-1.5z" fill="url(#gfold)"/><path d="M5.5 27.5L28.5 24.5V8" stroke="#d0ac48" stroke-width="1" fill="none"/><path d="M6 8h8" stroke="#c8b060" stroke-width="1"/></svg>
<svg class="ic" style="left:1161px;top:2px" viewBox="0 0 32 32" width="32" height="32"><path d="M5 6.5L6 4.5h7l2 2h13l1 1.5v17l-23 3.5-1-1.5z" fill="url(#gfold)"/><path d="M5.5 27.5L28.5 24.5V8" stroke="#d0ac48" stroke-width="1" fill="none"/><path d="M6 8h8" stroke="#c8b060" stroke-width="1"/></svg>
<svg class="ic" style="left:1237px;top:2px" viewBox="0 0 32 32" width="32" height="32"><path d="M5 6.5L6 4.5h7l2 2h13l1 1.5v17l-23 3.5-1-1.5z" fill="url(#gfold)"/><path d="M5.5 27.5L28.5 24.5V8" stroke="#d0ac48" stroke-width="1" fill="none"/><path d="M6 8h8" stroke="#c8b060" stroke-width="1"/></svg>
<svg class="ic" style="left:1313px;top:2px" viewBox="0 0 32 32" width="32" height="32"><path d="M5 6.5L6 4.5h7l2 2h13l1 1.5v17l-23 3.5-1-1.5z" fill="url(#gfold)"/><path d="M5.5 27.5L28.5 24.5V8" stroke="#d0ac48" stroke-width="1" fill="none"/><path d="M6 8h8" stroke="#c8b060" stroke-width="1"/></svg>
<svg class="ic" style="left:1389px;top:2px" viewBox="0 0 32 32" width="32" height="32"><path d="M5 6.5L6 4.5h7l2 2h13l1 1.5v17l-23 3.5-1-1.5z" fill="url(#gfold)"/><path d="M5.5 27.5L28.5 24.5V8" stroke="#d0ac48" stroke-width="1" fill="none"/><path d="M6 8h8" stroke="#c8b060" stroke-width="1"/></svg>
<svg class="ic" style="left:1465px;top:2px" viewBox="0 0 32 32" width="32" height="32"><path d="M10 2h14l7 7v22H10z" fill="#fff" stroke="#a0a0a0" stroke-width="0.8"/><path d="M24 2v7h7z" fill="#d8d8d8"/><path d="M1.5 5h22v6.5h-22z" fill="#d81818"/><path d="M1.5 11.5l3 2v-2z" fill="#801010"/><text x="12.5" y="10.5" font-size="6" font-weight="bold" fill="#fff" text-anchor="middle" font-family="Liberation Sans">PDF</text><path d="M13 27c3-3 6-9 5-12-2 1-1 6 9 9-6-2-11 0-14 3z" fill="none" stroke="#d81818" stroke-width="1.8"/><path d="M21 28h7" stroke="#808080" stroke-width="1.2"/></svg>
<svg class="ic" style="left:1541px;top:2px" viewBox="0 0 32 32" width="32" height="32"><path d="M5 1.5h16l7 7v22.5H5z" fill="#fff" stroke="#9aa4b0" stroke-width="0.8"/><path d="M21 1.5v7h7" fill="#d8dee6" stroke="#9aa4b0" stroke-width="0.8"/><path d="M9 10.5l11-1.5 2 13-11 1.5z" fill="#30a8e8"/><path d="M9 10.5l11-1.5 .5 3-11 1.5z" fill="#68c8f8"/></svg>
<svg class="ic" style="left:1617px;top:2px" viewBox="0 0 32 32" width="32" height="32"><path d="M14 1.5h9c5 0 9 4 9 9v19.5H8V12z" fill="#f4f8fa"/><path d="M23 1.5c5 0 9 4 9 9h-9z" fill="#2a6a80"/><path d="M8 11h5.5v19H8z" fill="#1a4070"/><path d="M8 11c2 6 3 12 5.5 18" stroke="#3a78a8" stroke-width="1.2" fill="none"/><path d="M1 14c4-5 10-7 16-6 3 0 5-1 7-3-3 4-6 5-9 5-5 0-10 1-14 4z" fill="#d8e2ea" stroke="#000" stroke-width="0.7"/><path d="M4 8c4-5 10-7 15-6 2 0 4 0 6-2-2 4-5 5-8 5-5 0-9 1-13 3z" fill="#c8d4de" stroke="#000" stroke-width="0.7"/><path d="M16.5 15.7h13M16.5 20.8h11M16.5 25.8h13" stroke="#2a5a78" stroke-width="1.9"/></svg>
<svg class="ic" style="left:933px;top:80px" viewBox="0 0 32 32" width="32" height="32"><path d="M6 3h19l6 5H11z" fill="#7a3050"/><path d="M10 8h21v5.5H10z" fill="#e060b8"/><path d="M10 11.5h21v2H10z" fill="#902070"/><path d="M10 14h21v5.5H10z" fill="#3858e0"/><path d="M10 17.5h21v2H10z" fill="#182890"/><path d="M10 20h21v7H10z" fill="#38c048"/><path d="M10 25h21v2H10z" fill="#107020"/><path d="M1 5l9 3v19l-9-3z" fill="#e8e8e8"/><path d="M2 9l7 3M2 14l7 3M2 19l7 3" stroke="#606060" stroke-width="1.3"/><path d="M17 3h4v25h-4z" fill="#b08848"/><circle cx="19" cy="14" r="3" fill="none" stroke="#d0d0d0" stroke-width="1.4"/></svg>
<svg class="ic" style="left:1009px;top:80px" viewBox="0 0 32 32" width="32" height="32"><path d="M6 3h19l6 5H11z" fill="#7a3050"/><path d="M10 8h21v5.5H10z" fill="#e060b8"/><path d="M10 11.5h21v2H10z" fill="#902070"/><path d="M10 14h21v5.5H10z" fill="#3858e0"/><path d="M10 17.5h21v2H10z" fill="#182890"/><path d="M10 20h21v7H10z" fill="#38c048"/><path d="M10 25h21v2H10z" fill="#107020"/><path d="M1 5l9 3v19l-9-3z" fill="#e8e8e8"/><path d="M2 9l7 3M2 14l7 3M2 19l7 3" stroke="#606060" stroke-width="1.3"/><path d="M17 3h4v25h-4z" fill="#b08848"/><circle cx="19" cy="14" r="3" fill="none" stroke="#d0d0d0" stroke-width="1.4"/></svg>
<svg class="ic" style="left:1085px;top:80px" viewBox="0 0 32 32" width="32" height="32"><path d="M5 6.5L6 4.5h7l2 2h13l1 1.5v17l-23 3.5-1-1.5z" fill="url(#gfold)"/><path d="M5.5 27.5L28.5 24.5V8" stroke="#d0ac48" stroke-width="1" fill="none"/><path d="M6 8h8" stroke="#c8b060" stroke-width="1"/></svg>
<svg class="ic" style="left:1161px;top:80px" viewBox="0 0 32 32" width="32" height="32"><path d="M5 6.5L6 4.5h7l2 2h13l1 1.5v17l-23 3.5-1-1.5z" fill="url(#gfold)"/><path d="M5.5 27.5L28.5 24.5V8" stroke="#d0ac48" stroke-width="1" fill="none"/><path d="M6 8h8" stroke="#c8b060" stroke-width="1"/></svg>
<svg class="ic" style="left:1237px;top:80px" viewBox="0 0 32 32" width="32" height="32"><path d="M5 6.5L6 4.5h7l2 2h13l1 1.5v17l-23 3.5-1-1.5z" fill="url(#gfold)"/><path d="M5.5 27.5L28.5 24.5V8" stroke="#d0ac48" stroke-width="1" fill="none"/><path d="M6 8h8" stroke="#c8b060" stroke-width="1"/></svg>
<svg class="ic" style="left:1313px;top:80px" viewBox="0 0 32 32" width="32" height="32"><path d="M5 6.5L6 4.5h7l2 2h13l1 1.5v17l-23 3.5-1-1.5z" fill="url(#gfold)"/><path d="M5.5 27.5L28.5 24.5V8" stroke="#d0ac48" stroke-width="1" fill="none"/><path d="M6 8h8" stroke="#c8b060" stroke-width="1"/></svg>
<svg class="ic" style="left:1389px;top:80px" viewBox="0 0 32 32" width="32" height="32"><path d="M5 6.5L6 4.5h7l2 2h13l1 1.5v17l-23 3.5-1-1.5z" fill="url(#gfold)"/><path d="M5.5 27.5L28.5 24.5V8" stroke="#d0ac48" stroke-width="1" fill="none"/><path d="M6 8h8" stroke="#c8b060" stroke-width="1"/></svg>
<svg class="ic" style="left:1465px;top:80px" viewBox="0 0 32 32" width="32" height="32"><path d="M10 2h14l7 7v22H10z" fill="#fff" stroke="#a0a0a0" stroke-width="0.8"/><path d="M24 2v7h7z" fill="#d8d8d8"/><path d="M1.5 5h22v6.5h-22z" fill="#d81818"/><path d="M1.5 11.5l3 2v-2z" fill="#801010"/><text x="12.5" y="10.5" font-size="6" font-weight="bold" fill="#fff" text-anchor="middle" font-family="Liberation Sans">PDF</text><path d="M13 27c3-3 6-9 5-12-2 1-1 6 9 9-6-2-11 0-14 3z" fill="none" stroke="#d81818" stroke-width="1.8"/><path d="M21 28h7" stroke="#808080" stroke-width="1.2"/></svg>
<svg class="ic" style="left:1541px;top:80px" viewBox="0 0 32 32" width="32" height="32"><path d="M5 1.5h16l7 7v22.5H5z" fill="#fff" stroke="#9aa4b0" stroke-width="0.8"/><path d="M21 1.5v7h7" fill="#d8dee6" stroke="#9aa4b0" stroke-width="0.8"/><path d="M9 10.5l11-1.5 2 13-11 1.5z" fill="#30a8e8"/><path d="M9 10.5l11-1.5 .5 3-11 1.5z" fill="#68c8f8"/></svg>
<svg class="ic" style="left:1617px;top:80px" viewBox="0 0 32 32" width="32" height="32"><path d="M14 1.5h9c5 0 9 4 9 9v19.5H8V12z" fill="#f4f8fa"/><path d="M23 1.5c5 0 9 4 9 9h-9z" fill="#2a6a80"/><path d="M8 11h5.5v19H8z" fill="#1a4070"/><path d="M8 11c2 6 3 12 5.5 18" stroke="#3a78a8" stroke-width="1.2" fill="none"/><path d="M1 14c4-5 10-7 16-6 3 0 5-1 7-3-3 4-6 5-9 5-5 0-10 1-14 4z" fill="#d8e2ea" stroke="#000" stroke-width="0.7"/><path d="M4 8c4-5 10-7 15-6 2 0 4 0 6-2-2 4-5 5-8 5-5 0-9 1-13 3z" fill="#c8d4de" stroke="#000" stroke-width="0.7"/><path d="M16.5 15.7h13M16.5 20.8h11M16.5 25.8h13" stroke="#2a5a78" stroke-width="1.9"/></svg>
<svg class="ic" style="left:933px;top:158px" viewBox="0 0 32 32" width="32" height="32"><path d="M6 3h19l6 5H11z" fill="#7a3050"/><path d="M10 8h21v5.5H10z" fill="#e060b8"/><path d="M10 11.5h21v2H10z" fill="#902070"/><path d="M10 14h21v5.5H10z" fill="#3858e0"/><path d="M10 17.5h21v2H10z" fill="#182890"/><path d="M10 20h21v7H10z" fill="#38c048"/><path d="M10 25h21v2H10z" fill="#107020"/><path d="M1 5l9 3v19l-9-3z" fill="#e8e8e8"/><path d="M2 9l7 3M2 14l7 3M2 19l7 3" stroke="#606060" stroke-width="1.3"/><path d="M17 3h4v25h-4z" fill="#b08848"/><circle cx="19" cy="14" r="3" fill="none" stroke="#d0d0d0" stroke-width="1.4"/></svg>
<svg class="ic" style="left:1009px;top:158px" viewBox="0 0 32 32" width="32" height="32"><path d="M6 3h19l6 5H11z" fill="#7a3050"/><path d="M10 8h21v5.5H10z" fill="#e060b8"/><path d="M10 11.5h21v2H10z" fill="#902070"/><path d="M10 14h21v5.5H10z" fill="#3858e0"/><path d="M10 17.5h21v2H10z" fill="#182890"/><path d="M10 20h21v7H10z" fill="#38c048"/><path d="M10 25h21v2H10z" fill="#107020"/><path d="M1 5l9 3v19l-9-3z" fill="#e8e8e8"/><path d="M2 9l7 3M2 14l7 3M2 19l7 3" stroke="#606060" stroke-width="1.3"/><path d="M17 3h4v25h-4z" fill="#b08848"/><circle cx="19" cy="14" r="3" fill="none" stroke="#d0d0d0" stroke-width="1.4"/></svg>
<svg class="ic" style="left:1085px;top:158px" viewBox="0 0 32 32" width="32" height="32"><path d="M5 6.5L6 4.5h7l2 2h13l1 1.5v17l-23 3.5-1-1.5z" fill="url(#gfold)"/><path d="M5.5 27.5L28.5 24.5V8" stroke="#d0ac48" stroke-width="1" fill="none"/><path d="M6 8h8" stroke="#c8b060" stroke-width="1"/></svg>
<svg class="ic" style="left:1161px;top:158px" viewBox="0 0 32 32" width="32" height="32"><path d="M5 6.5L6 4.5h7l2 2h13l1 1.5v17l-23 3.5-1-1.5z" fill="url(#gfold)"/><path d="M5.5 27.5L28.5 24.5V8" stroke="#d0ac48" stroke-width="1" fill="none"/><path d="M6 8h8" stroke="#c8b060" stroke-width="1"/></svg>
<svg class="ic" style="left:1237px;top:158px" viewBox="0 0 32 32" width="32" height="32"><path d="M5 6.5L6 4.5h7l2 2h13l1 1.5v17l-23 3.5-1-1.5z" fill="url(#gfold)"/><path d="M5.5 27.5L28.5 24.5V8" stroke="#d0ac48" stroke-width="1" fill="none"/><path d="M6 8h8" stroke="#c8b060" stroke-width="1"/></svg>
<svg class="ic" style="left:1313px;top:158px" viewBox="0 0 32 32" width="32" height="32"><path d="M5 6.5L6 4.5h7l2 2h13l1 1.5v17l-23 3.5-1-1.5z" fill="url(#gfold)"/><path d="M5.5 27.5L28.5 24.5V8" stroke="#d0ac48" stroke-width="1" fill="none"/><path d="M6 8h8" stroke="#c8b060" stroke-width="1"/></svg>
<svg class="ic" style="left:1389px;top:158px" viewBox="0 0 32 32" width="32" height="32"><path d="M5 6.5L6 4.5h7l2 2h13l1 1.5v17l-23 3.5-1-1.5z" fill="url(#gfold)"/><path d="M5.5 27.5L28.5 24.5V8" stroke="#d0ac48" stroke-width="1" fill="none"/><path d="M6 8h8" stroke="#c8b060" stroke-width="1"/></svg>
<svg class="ic" style="left:1465px;top:158px" viewBox="0 0 32 32" width="32" height="32"><path d="M10 2h14l7 7v22H10z" fill="#fff" stroke="#a0a0a0" stroke-width="0.8"/><path d="M24 2v7h7z" fill="#d8d8d8"/><path d="M1.5 5h22v6.5h-22z" fill="#d81818"/><path d="M1.5 11.5l3 2v-2z" fill="#801010"/><text x="12.5" y="10.5" font-size="6" font-weight="bold" fill="#fff" text-anchor="middle" font-family="Liberation Sans">PDF</text><path d="M13 27c3-3 6-9 5-12-2 1-1 6 9 9-6-2-11 0-14 3z" fill="none" stroke="#d81818" stroke-width="1.8"/><path d="M21 28h7" stroke="#808080" stroke-width="1.2"/></svg>
<svg class="ic" style="left:1541px;top:158px" viewBox="0 0 32 32" width="32" height="32"><path d="M5 1.5h16l7 7v22.5H5z" fill="#fff" stroke="#9aa4b0" stroke-width="0.8"/><path d="M21 1.5v7h7" fill="#d8dee6" stroke="#9aa4b0" stroke-width="0.8"/><path d="M9 10.5l11-1.5 2 13-11 1.5z" fill="#30a8e8"/><path d="M9 10.5l11-1.5 .5 3-11 1.5z" fill="#68c8f8"/></svg>
<svg class="ic" style="left:1617px;top:158px" viewBox="0 0 32 32" width="32" height="32"><path d="M14 1.5h9c5 0 9 4 9 9v19.5H8V12z" fill="#f4f8fa"/><path d="M23 1.5c5 0 9 4 9 9h-9z" fill="#2a6a80"/><path d="M8 11h5.5v19H8z" fill="#1a4070"/><path d="M8 11c2 6 3 12 5.5 18" stroke="#3a78a8" stroke-width="1.2" fill="none"/><path d="M1 14c4-5 10-7 16-6 3 0 5-1 7-3-3 4-6 5-9 5-5 0-10 1-14 4z" fill="#d8e2ea" stroke="#000" stroke-width="0.7"/><path d="M4 8c4-5 10-7 15-6 2 0 4 0 6-2-2 4-5 5-8 5-5 0-9 1-13 3z" fill="#c8d4de" stroke="#000" stroke-width="0.7"/><path d="M16.5 15.7h13M16.5 20.8h11M16.5 25.8h13" stroke="#2a5a78" stroke-width="1.9"/></svg>
<svg class="ic" style="left:933px;top:236px" viewBox="0 0 32 32" width="32" height="32"><path d="M6 3h19l6 5H11z" fill="#7a3050"/><path d="M10 8h21v5.5H10z" fill="#e060b8"/><path d="M10 11.5h21v2H10z" fill="#902070"/><path d="M10 14h21v5.5H10z" fill="#3858e0"/><path d="M10 17.5h21v2H10z" fill="#182890"/><path d="M10 20h21v7H10z" fill="#38c048"/><path d="M10 25h21v2H10z" fill="#107020"/><path d="M1 5l9 3v19l-9-3z" fill="#e8e8e8"/><path d="M2 9l7 3M2 14l7 3M2 19l7 3" stroke="#606060" stroke-width="1.3"/><path d="M17 3h4v25h-4z" fill="#b08848"/><circle cx="19" cy="14" r="3" fill="none" stroke="#d0d0d0" stroke-width="1.4"/></svg>
<svg class="ic" style="left:1009px;top:236px" viewBox="0 0 32 32" width="32" height="32"><path d="M6 3h19l6 5H11z" fill="#7a3050"/><path d="M10 8h21v5.5H10z" fill="#e060b8"/><path d="M10 11.5h21v2H10z" fill="#902070"/><path d="M10 14h21v5.5H10z" fill="#3858e0"/><path d="M10 17.5h21v2H10z" fill="#182890"/><path d="M10 20h21v7H10z" fill="#38c048"/><path d="M10 25h21v2H10z" fill="#107020"/><path d="M1 5l9 3v19l-9-3z" fill="#e8e8e8"/><path d="M2 9l7 3M2 14l7 3M2 19l7 3" stroke="#606060" stroke-width="1.3"/><path d="M17 3h4v25h-4z" fill="#b08848"/><circle cx="19" cy="14" r="3" fill="none" stroke="#d0d0d0" stroke-width="1.4"/></svg>
<svg class="ic" style="left:1085px;top:236px" viewBox="0 0 32 32" width="32" height="32"><path d="M5 6.5L6 4.5h7l2 2h13l1 1.5v17l-23 3.5-1-1.5z" fill="url(#gfold)"/><path d="M5.5 27.5L28.5 24.5V8" stroke="#d0ac48" stroke-width="1" fill="none"/><path d="M6 8h8" stroke="#c8b060" stroke-width="1"/></svg>
<svg class="ic" style="left:1161px;top:236px" viewBox="0 0 32 32" width="32" height="32"><path d="M5 6.5L6 4.5h7l2 2h13l1 1.5v17l-23 3.5-1-1.5z" fill="url(#gfold)"/><path d="M5.5 27.5L28.5 24.5V8" stroke="#d0ac48" stroke-width="1" fill="none"/><path d="M6 8h8" stroke="#c8b060" stroke-width="1"/></svg>
<svg class="ic" style="left:1237px;top:236px" viewBox="0 0 32 32" width="32" height="32"><path d="M5 6.5L6 4.5h7l2 2h13l1 1.5v17l-23 3.5-1-1.5z" fill="url(#gfold)"/><path d="M5.5 27.5L28.5 24.5V8" stroke="#d0ac48" stroke-width="1" fill="none"/><path d="M6 8h8" stroke="#c8b060" stroke-width="1"/></svg>
<svg class="ic" style="left:1313px;top:236px" viewBox="0 0 32 32" width="32" height="32"><path d="M5 6.5L6 4.5h7l2 2h13l1 1.5v17l-23 3.5-1-1.5z" fill="url(#gfold)"/><path d="M5.5 27.5L28.5 24.5V8" stroke="#d0ac48" stroke-width="1" fill="none"/><path d="M6 8h8" stroke="#c8b060" stroke-width="1"/></svg>
<svg class="ic" style="left:1389px;top:236px" viewBox="0 0 32 32" width="32" height="32"><path d="M5 6.5L6 4.5h7l2 2h13l1 1.5v17l-23 3.5-1-1.5z" fill="url(#gfold)"/><path d="M5.5 27.5L28.5 24.5V8" stroke="#d0ac48" stroke-width="1" fill="none"/><path d="M6 8h8" stroke="#c8b060" stroke-width="1"/></svg>
<svg class="ic" style="left:1465px;top:236px" viewBox="0 0 32 32" width="32" height="32"><path d="M10 2h14l7 7v22H10z" fill="#fff" stroke="#a0a0a0" stroke-width="0.8"/><path d="M24 2v7h7z" fill="#d8d8d8"/><path d="M1.5 5h22v6.5h-22z" fill="#d81818"/><path d="M1.5 11.5l3 2v-2z" fill="#801010"/><text x="12.5" y="10.5" font-size="6" font-weight="bold" fill="#fff" text-anchor="middle" font-family="Liberation Sans">PDF</text><path d="M13 27c3-3 6-9 5-12-2 1-1 6 9 9-6-2-11 0-14 3z" fill="none" stroke="#d81818" stroke-width="1.8"/><path d="M21 28h7" stroke="#808080" stroke-width="1.2"/></svg>
<svg class="ic" style="left:1541px;top:236px" viewBox="0 0 32 32" width="32" height="32"><path d="M5 1.5h16l7 7v22.5H5z" fill="#fff" stroke="#9aa4b0" stroke-width="0.8"/><path d="M21 1.5v7h7" fill="#d8dee6" stroke="#9aa4b0" stroke-width="0.8"/><path d="M9 10.5l11-1.5 2 13-11 1.5z" fill="#30a8e8"/><path d="M9 10.5l11-1.5 .5 3-11 1.5z" fill="#68c8f8"/></svg>
<svg class="ic" style="left:1617px;top:236px" viewBox="0 0 32 32" width="32" height="32"><path d="M7.5 1h17l7 7v22.5H7.5z" fill="url(#gpageb)" stroke="#7f9db9" stroke-width="0.8"/><path d="M24.5 1v7h7z" fill="#a8c8ec" stroke="#7f9db9" stroke-width="0.8"/><path d="M11 21h17M11 24h17M11 27h13M20 12h8M20 15h8M20 18h8" stroke="#9cb4d8" stroke-width="1"/><rect x="2" y="3" width="15.5" height="15" fill="#2a5cc0" stroke="#1a3a80" stroke-width="0.8"/><path d="M2.5 3.5h14.5v4H2.5z" fill="#5a8ae0" opacity="0.6"/><path d="M4.5 6l2.2 9 2.8-7 2.8 7 2.2-9" stroke="#fff" stroke-width="1.8" fill="none"/></svg>
<svg class="ic" style="left:933px;top:314px" viewBox="0 0 32 32" width="32" height="32"><path d="M5 1.5h16l7 7v22.5H5z" fill="url(#gpageb)" stroke="#7f9db9" stroke-width="0.8"/><path d="M21 1.5v7h7z" fill="#a8c8ec" stroke="#7f9db9" stroke-width="0.8"/><rect x="8" y="6.5" width="17" height="18.5" fill="url(#gjpg)"/><path d="M12 10c3-1 5 1 5 4 0 4-2 6-2 11h-5c0-5 0-8 1-11z" fill="#f8d0a0" opacity="0.55"/><path d="M19 8h5v6h-5z" fill="#ffd080" opacity="0.5"/></svg>
<svg class="ic" style="left:1009px;top:314px" viewBox="0 0 32 32" width="32" height="32"><path d="M5 1.5h16l7 7v22.5H5z" fill="#fff" stroke="#9aa4b0" stroke-width="0.8"/><path d="M21 1.5v7h7" fill="#d8dee6" stroke="#9aa4b0" stroke-width="0.8"/><circle cx="12" cy="18" r="2.2" fill="#e8c020"/><circle cx="17" cy="15" r="2.5" fill="#f0d030"/><circle cx="16" cy="20" r="2.5" fill="#e0b000"/><circle cx="21" cy="19" r="1.8" fill="#f0e060"/><circle cx="14" cy="12" r="1" fill="#504020"/><circle cx="20" cy="12" r="1" fill="#504020"/><circle cx="23" cy="16" r="1" fill="#c03030"/></svg>
<svg class="ic" style="left:1085px;top:314px" viewBox="0 0 32 32" width="32" height="32"><path d="M5 6.5L6 4.5h7l2 2h13l1 1.5v17l-23 3.5-1-1.5z" fill="url(#gfold)"/><path d="M5.5 27.5L28.5 24.5V8" stroke="#d0ac48" stroke-width="1" fill="none"/><path d="M6 8h8" stroke="#c8b060" stroke-width="1"/></svg>
<svg class="ic" style="left:1161px;top:314px" viewBox="0 0 32 32" width="32" height="32"><path d="M5 6.5L6 4.5h7l2 2h13l1 1.5v17l-23 3.5-1-1.5z" fill="url(#gfold)"/><path d="M5.5 27.5L28.5 24.5V8" stroke="#d0ac48" stroke-width="1" fill="none"/><path d="M6 8h8" stroke="#c8b060" stroke-width="1"/></svg>
<svg class="ic" style="left:1237px;top:314px" viewBox="0 0 32 32" width="32" height="32"><path d="M5 6.5L6 4.5h7l2 2h13l1 1.5v17l-23 3.5-1-1.5z" fill="url(#gfold)"/><path d="M5.5 27.5L28.5 24.5V8" stroke="#d0ac48" stroke-width="1" fill="none"/><path d="M6 8h8" stroke="#c8b060" stroke-width="1"/></svg>
<svg class="ic" style="left:1313px;top:314px" viewBox="0 0 32 32" width="32" height="32"><path d="M5 6.5L6 4.5h7l2 2h13l1 1.5v17l-23 3.5-1-1.5z" fill="url(#gfold)"/><path d="M5.5 27.5L28.5 24.5V8" stroke="#d0ac48" stroke-width="1" fill="none"/><path d="M6 8h8" stroke="#c8b060" stroke-width="1"/></svg>
<svg class="ic" style="left:1389px;top:314px" viewBox="0 0 32 32" width="32" height="32"><path d="M5 6.5L6 4.5h7l2 2h13l1 1.5v17l-23 3.5-1-1.5z" fill="url(#gfold)"/><path d="M5.5 27.5L28.5 24.5V8" stroke="#d0ac48" stroke-width="1" fill="none"/><path d="M6 8h8" stroke="#c8b060" stroke-width="1"/></svg>
<svg class="ic" style="left:1465px;top:314px" viewBox="0 0 32 32" width="32" height="32"><path d="M10 2h14l7 7v22H10z" fill="#fff" stroke="#a0a0a0" stroke-width="0.8"/><path d="M24 2v7h7z" fill="#d8d8d8"/><path d="M1.5 5h22v6.5h-22z" fill="#d81818"/><path d="M1.5 11.5l3 2v-2z" fill="#801010"/><text x="12.5" y="10.5" font-size="6" font-weight="bold" fill="#fff" text-anchor="middle" font-family="Liberation Sans">PDF</text><path d="M13 27c3-3 6-9 5-12-2 1-1 6 9 9-6-2-11 0-14 3z" fill="none" stroke="#d81818" stroke-width="1.8"/><path d="M21 28h7" stroke="#808080" stroke-width="1.2"/></svg>
<svg class="ic" style="left:1541px;top:314px" viewBox="0 0 32 32" width="32" height="32"><path d="M5 1.5h16l7 7v22.5H5z" fill="#fff" stroke="#9aa4b0" stroke-width="0.8"/><path d="M21 1.5v7h7" fill="#d8dee6" stroke="#9aa4b0" stroke-width="0.8"/><path d="M9 10.5l11-1.5 2 13-11 1.5z" fill="#30a8e8"/><path d="M9 10.5l11-1.5 .5 3-11 1.5z" fill="#68c8f8"/></svg>
<svg class="ic" style="left:1617px;top:314px" viewBox="0 0 32 32" width="32" height="32"><path d="M14 1.5h9c5 0 9 4 9 9v19.5H8V12z" fill="#f4f8fa"/><path d="M23 1.5c5 0 9 4 9 9h-9z" fill="#2a6a80"/><path d="M8 11h5.5v19H8z" fill="#1a4070"/><path d="M8 11c2 6 3 12 5.5 18" stroke="#3a78a8" stroke-width="1.2" fill="none"/><path d="M1 14c4-5 10-7 16-6 3 0 5-1 7-3-3 4-6 5-9 5-5 0-10 1-14 4z" fill="#d8e2ea" stroke="#000" stroke-width="0.7"/><path d="M4 8c4-5 10-7 15-6 2 0 4 0 6-2-2 4-5 5-8 5-5 0-9 1-13 3z" fill="#c8d4de" stroke="#000" stroke-width="0.7"/><path d="M16.5 15.7h13M16.5 20.8h11M16.5 25.8h13" stroke="#2a5a78" stroke-width="1.9"/></svg>
<svg class="ic" style="left:933px;top:392px" viewBox="0 0 32 32" width="32" height="32"><path d="M5 1.5h16l7 7v22.5H5z" fill="url(#gpageb)" stroke="#7f9db9" stroke-width="0.8"/><path d="M21 1.5v7h7z" fill="#a8c8ec" stroke="#7f9db9" stroke-width="0.8"/><rect x="8" y="6.5" width="17" height="18.5" fill="url(#gjpg)"/><path d="M12 10c3-1 5 1 5 4 0 4-2 6-2 11h-5c0-5 0-8 1-11z" fill="#f8d0a0" opacity="0.55"/><path d="M19 8h5v6h-5z" fill="#ffd080" opacity="0.5"/></svg>
<svg class="ic" style="left:1085px;top:392px" viewBox="0 0 32 32" width="32" height="32"><path d="M5 6.5L6 4.5h7l2 2h13l1 1.5v17l-23 3.5-1-1.5z" fill="url(#gfold)"/><path d="M5.5 27.5L28.5 24.5V8" stroke="#d0ac48" stroke-width="1" fill="none"/><path d="M6 8h8" stroke="#c8b060" stroke-width="1"/></svg>
<svg class="ic" style="left:1161px;top:392px" viewBox="0 0 32 32" width="32" height="32"><path d="M5 6.5L6 4.5h7l2 2h13l1 1.5v17l-23 3.5-1-1.5z" fill="url(#gfold)"/><path d="M5.5 27.5L28.5 24.5V8" stroke="#d0ac48" stroke-width="1" fill="none"/><path d="M6 8h8" stroke="#c8b060" stroke-width="1"/></svg>
<svg class="ic" style="left:1237px;top:392px" viewBox="0 0 32 32" width="32" height="32"><path d="M5 6.5L6 4.5h7l2 2h13l1 1.5v17l-23 3.5-1-1.5z" fill="url(#gfold)"/><path d="M5.5 27.5L28.5 24.5V8" stroke="#d0ac48" stroke-width="1" fill="none"/><path d="M6 8h8" stroke="#c8b060" stroke-width="1"/></svg>
<svg class="ic" style="left:1313px;top:392px" viewBox="0 0 32 32" width="32" height="32"><path d="M5 6.5L6 4.5h7l2 2h13l1 1.5v17l-23 3.5-1-1.5z" fill="url(#gfold)"/><path d="M5.5 27.5L28.5 24.5V8" stroke="#d0ac48" stroke-width="1" fill="none"/><path d="M6 8h8" stroke="#c8b060" stroke-width="1"/></svg>
<svg class="ic" style="left:1389px;top:392px" viewBox="0 0 32 32" width="32" height="32"><path d="M5 6.5L6 4.5h7l2 2h13l1 1.5v17l-23 3.5-1-1.5z" fill="url(#gfold)"/><path d="M5.5 27.5L28.5 24.5V8" stroke="#d0ac48" stroke-width="1" fill="none"/><path d="M6 8h8" stroke="#c8b060" stroke-width="1"/></svg>
<svg class="ic" style="left:1465px;top:392px" viewBox="0 0 32 32" width="32" height="32"><path d="M10 2h14l7 7v22H10z" fill="#fff" stroke="#a0a0a0" stroke-width="0.8"/><path d="M24 2v7h7z" fill="#d8d8d8"/><path d="M1.5 5h22v6.5h-22z" fill="#d81818"/><path d="M1.5 11.5l3 2v-2z" fill="#801010"/><text x="12.5" y="10.5" font-size="6" font-weight="bold" fill="#fff" text-anchor="middle" font-family="Liberation Sans">PDF</text><path d="M13 27c3-3 6-9 5-12-2 1-1 6 9 9-6-2-11 0-14 3z" fill="none" stroke="#d81818" stroke-width="1.8"/><path d="M21 28h7" stroke="#808080" stroke-width="1.2"/></svg>
<svg class="ic" style="left:1541px;top:392px" viewBox="0 0 32 32" width="32" height="32"><path d="M5 1.5h16l7 7v22.5H5z" fill="#fff" stroke="#9aa4b0" stroke-width="0.8"/><path d="M21 1.5v7h7" fill="#d8dee6" stroke="#9aa4b0" stroke-width="0.8"/><path d="M9 10.5l11-1.5 2 13-11 1.5z" fill="#30a8e8"/><path d="M9 10.5l11-1.5 .5 3-11 1.5z" fill="#68c8f8"/></svg>
<svg class="ic" style="left:1617px;top:392px" viewBox="0 0 32 32" width="32" height="32"><path d="M7.5 1h17l7 7v22.5H7.5z" fill="url(#gpageb)" stroke="#7f9db9" stroke-width="0.8"/><path d="M24.5 1v7h7z" fill="#a8c8ec" stroke="#7f9db9" stroke-width="0.8"/><path d="M11 21h17M11 24h17M11 27h13M20 12h8M20 15h8M20 18h8" stroke="#9cb4d8" stroke-width="1"/><rect x="2" y="3" width="15.5" height="15" fill="#2a5cc0" stroke="#1a3a80" stroke-width="0.8"/><path d="M2.5 3.5h14.5v4H2.5z" fill="#5a8ae0" opacity="0.6"/><path d="M4.5 6l2.2 9 2.8-7 2.8 7 2.2-9" stroke="#fff" stroke-width="1.8" fill="none"/></svg>
<svg class="ic" style="left:933px;top:470px" viewBox="0 0 32 32" width="32" height="32"><path d="M5 1.5h16l7 7v22.5H5z" fill="url(#gpageb)" stroke="#7f9db9" stroke-width="0.8"/><path d="M21 1.5v7h7z" fill="#a8c8ec" stroke="#7f9db9" stroke-width="0.8"/><rect x="8" y="6.5" width="17" height="18.5" fill="url(#gjpg)"/><path d="M12 10c3-1 5 1 5 4 0 4-2 6-2 11h-5c0-5 0-8 1-11z" fill="#f8d0a0" opacity="0.55"/><path d="M19 8h5v6h-5z" fill="#ffd080" opacity="0.5"/></svg>
<svg class="ic" style="left:1085px;top:470px" viewBox="0 0 32 32" width="32" height="32"><path d="M5 6.5L6 4.5h7l2 2h13l1 1.5v17l-23 3.5-1-1.5z" fill="url(#gfold)"/><path d="M5.5 27.5L28.5 24.5V8" stroke="#d0ac48" stroke-width="1" fill="none"/><path d="M6 8h8" stroke="#c8b060" stroke-width="1"/></svg>
<svg class="ic" style="left:1161px;top:470px" viewBox="0 0 32 32" width="32" height="32"><path d="M5 6.5L6 4.5h7l2 2h13l1 1.5v17l-23 3.5-1-1.5z" fill="url(#gfold)"/><path d="M5.5 27.5L28.5 24.5V8" stroke="#d0ac48" stroke-width="1" fill="none"/><path d="M6 8h8" stroke="#c8b060" stroke-width="1"/></svg>
<svg class="ic" style="left:1237px;top:470px" viewBox="0 0 32 32" width="32" height="32"><path d="M5 6.5L6 4.5h7l2 2h13l1 1.5v17l-23 3.5-1-1.5z" fill="url(#gfold)"/><path d="M5.5 27.5L28.5 24.5V8" stroke="#d0ac48" stroke-width="1" fill="none"/><path d="M6 8h8" stroke="#c8b060" stroke-width="1"/></svg>
<svg class="ic" style="left:1313px;top:470px" viewBox="0 0 32 32" width="32" height="32"><path d="M5 6.5L6 4.5h7l2 2h13l1 1.5v17l-23 3.5-1-1.5z" fill="url(#gfold)"/><path d="M5.5 27.5L28.5 24.5V8" stroke="#d0ac48" stroke-width="1" fill="none"/><path d="M6 8h8" stroke="#c8b060" stroke-width="1"/></svg>
<svg class="ic" style="left:1389px;top:470px" viewBox="0 0 32 32" width="32" height="32"><path d="M5 6.5L6 4.5h7l2 2h13l1 1.5v17l-23 3.5-1-1.5z" fill="url(#gfold)"/><path d="M5.5 27.5L28.5 24.5V8" stroke="#d0ac48" stroke-width="1" fill="none"/><path d="M6 8h8" stroke="#c8b060" stroke-width="1"/></svg>
<svg class="ic" style="left:1465px;top:470px" viewBox="0 0 32 32" width="32" height="32"><path d="M5 1.5h16l7 7v22.5H5z" fill="#fff" stroke="#9aa4b0" stroke-width="0.8"/><path d="M21 1.5v7h7" fill="#d8dee6" stroke="#9aa4b0" stroke-width="0.8"/><rect x="8" y="10" width="18" height="13" fill="#fff" stroke="#404858" stroke-width="1"/><rect x="8" y="10" width="18" height="3" fill="#1a3a98"/><path d="M11 18h3M17 18h2M22 18h2" stroke="#d02020" stroke-width="2"/><circle cx="19" cy="18" r="1.5" fill="#2040c0"/><path d="M22 16v4" stroke="#20a030" stroke-width="2"/></svg>
<svg class="ic" style="left:1541px;top:470px" viewBox="0 0 32 32" width="32" height="32"><path d="M5 1.5h16l7 7v22.5H5z" fill="#fff" stroke="#9aa4b0" stroke-width="0.8"/><path d="M21 1.5v7h7" fill="#d8dee6" stroke="#9aa4b0" stroke-width="0.8"/><path d="M9 10.5l11-1.5 2 13-11 1.5z" fill="#30a8e8"/><path d="M9 10.5l11-1.5 .5 3-11 1.5z" fill="#68c8f8"/></svg>
<svg class="ic" style="left:1617px;top:470px" viewBox="0 0 32 32" width="32" height="32"><path d="M7.5 1h17l7 7v22.5H7.5z" fill="url(#gpageb)" stroke="#7f9db9" stroke-width="0.8"/><path d="M24.5 1v7h7z" fill="#a8c8ec" stroke="#7f9db9" stroke-width="0.8"/><path d="M11 21h17M11 24h17M11 27h13M20 12h8M20 15h8M20 18h8" stroke="#9cb4d8" stroke-width="1"/><rect x="2" y="3" width="15.5" height="15" fill="#2a5cc0" stroke="#1a3a80" stroke-width="0.8"/><path d="M2.5 3.5h14.5v4H2.5z" fill="#5a8ae0" opacity="0.6"/><path d="M4.5 6l2.2 9 2.8-7 2.8 7 2.2-9" stroke="#fff" stroke-width="1.8" fill="none"/></svg>
<svg class="ic" style="left:933px;top:548px" viewBox="0 0 32 32" width="32" height="32"><path d="M5 1.5h16l7 7v22.5H5z" fill="url(#gpageb)" stroke="#7f9db9" stroke-width="0.8"/><path d="M21 1.5v7h7z" fill="#a8c8ec" stroke="#7f9db9" stroke-width="0.8"/><rect x="8" y="6.5" width="17" height="18.5" fill="url(#gjpg)"/><path d="M12 10c3-1 5 1 5 4 0 4-2 6-2 11h-5c0-5 0-8 1-11z" fill="#f8d0a0" opacity="0.55"/><path d="M19 8h5v6h-5z" fill="#ffd080" opacity="0.5"/></svg>
<svg class="ic" style="left:1085px;top:548px" viewBox="0 0 32 32" width="32" height="32"><path d="M5 6.5L6 4.5h7l2 2h13l1 1.5v17l-23 3.5-1-1.5z" fill="url(#gfold)"/><path d="M5.5 27.5L28.5 24.5V8" stroke="#d0ac48" stroke-width="1" fill="none"/><path d="M6 8h8" stroke="#c8b060" stroke-width="1"/></svg>
<svg class="ic" style="left:1161px;top:548px" viewBox="0 0 32 32" width="32" height="32"><path d="M5 6.5L6 4.5h7l2 2h13l1 1.5v17l-23 3.5-1-1.5z" fill="url(#gfold)"/><path d="M5.5 27.5L28.5 24.5V8" stroke="#d0ac48" stroke-width="1" fill="none"/><path d="M6 8h8" stroke="#c8b060" stroke-width="1"/></svg>
<svg class="ic" style="left:1237px;top:548px" viewBox="0 0 32 32" width="32" height="32"><path d="M5 6.5L6 4.5h7l2 2h13l1 1.5v17l-23 3.5-1-1.5z" fill="url(#gfold)"/><path d="M5.5 27.5L28.5 24.5V8" stroke="#d0ac48" stroke-width="1" fill="none"/><path d="M6 8h8" stroke="#c8b060" stroke-width="1"/></svg>
<svg class="ic" style="left:1313px;top:548px" viewBox="0 0 32 32" width="32" height="32"><path d="M5 6.5L6 4.5h7l2 2h13l1 1.5v17l-23 3.5-1-1.5z" fill="url(#gfold)"/><path d="M5.5 27.5L28.5 24.5V8" stroke="#d0ac48" stroke-width="1" fill="none"/><path d="M6 8h8" stroke="#c8b060" stroke-width="1"/></svg>
<svg class="ic" style="left:1389px;top:548px" viewBox="0 0 32 32" width="32" height="32"><path d="M5 6.5L6 4.5h7l2 2h13l1 1.5v17l-23 3.5-1-1.5z" fill="url(#gfold)"/><path d="M5.5 27.5L28.5 24.5V8" stroke="#d0ac48" stroke-width="1" fill="none"/><path d="M6 8h8" stroke="#c8b060" stroke-width="1"/></svg>
<svg class="ic" style="left:1465px;top:548px" viewBox="0 0 32 32" width="32" height="32"><path d="M5 1.5h16l7 7v22.5H5z" fill="#fff" stroke="#9aa4b0" stroke-width="0.8"/><path d="M21 1.5v7h7" fill="#d8dee6" stroke="#9aa4b0" stroke-width="0.8"/><rect x="8" y="10" width="18" height="13" fill="#fff" stroke="#404858" stroke-width="1"/><rect x="8" y="10" width="18" height="3" fill="#1a3a98"/><path d="M11 18h3M17 18h2M22 18h2" stroke="#d02020" stroke-width="2"/><circle cx="19" cy="18" r="1.5" fill="#2040c0"/><path d="M22 16v4" stroke="#20a030" stroke-width="2"/></svg>
<svg class="ic" style="left:1541px;top:548px" viewBox="0 0 32 32" width="32" height="32"><path d="M5 1.5h16l7 7v22.5H5z" fill="#fff" stroke="#9aa4b0" stroke-width="0.8"/><path d="M21 1.5v7h7" fill="#d8dee6" stroke="#9aa4b0" stroke-width="0.8"/><path d="M9 10.5l11-1.5 2 13-11 1.5z" fill="#30a8e8"/><path d="M9 10.5l11-1.5 .5 3-11 1.5z" fill="#68c8f8"/></svg>
<svg class="ic" style="left:1617px;top:548px" viewBox="0 0 32 32" width="32" height="32"><path d="M7.5 1h17l7 7v22.5H7.5z" fill="url(#gpageb)" stroke="#7f9db9" stroke-width="0.8"/><path d="M24.5 1v7h7z" fill="#a8c8ec" stroke="#7f9db9" stroke-width="0.8"/><path d="M11 21h17M11 24h17M11 27h13M20 12h8M20 15h8M20 18h8" stroke="#9cb4d8" stroke-width="1"/><rect x="2" y="3" width="15.5" height="15" fill="#2a5cc0" stroke="#1a3a80" stroke-width="0.8"/><path d="M2.5 3.5h14.5v4H2.5z" fill="#5a8ae0" opacity="0.6"/><path d="M4.5 6l2.2 9 2.8-7 2.8 7 2.2-9" stroke="#fff" stroke-width="1.8" fill="none"/></svg>
<svg class="ic" style="left:933px;top:626px" viewBox="0 0 32 32" width="32" height="32"><path d="M5 1.5h16l7 7v22.5H5z" fill="url(#gpageb)" stroke="#7f9db9" stroke-width="0.8"/><path d="M21 1.5v7h7z" fill="#a8c8ec" stroke="#7f9db9" stroke-width="0.8"/><rect x="8" y="6.5" width="17" height="18.5" fill="url(#gjpg)"/><path d="M12 10c3-1 5 1 5 4 0 4-2 6-2 11h-5c0-5 0-8 1-11z" fill="#f8d0a0" opacity="0.55"/><path d="M19 8h5v6h-5z" fill="#ffd080" opacity="0.5"/></svg>
<svg class="ic" style="left:1009px;top:626px" viewBox="0 0 32 32" width="32" height="32"><path d="M8 3h14l6 6v22H8z" fill="#1a3c98" stroke="#0a1a50" stroke-width="0.8"/><path d="M22 3v6h6z" fill="#90b0e0"/><rect x="1" y="3" width="20" height="8" fill="#3a78d8"/><text x="10" y="9.5" font-size="6" fill="#e0f0ff" text-anchor="middle" font-family="Liberation Sans" font-weight="bold">PSD</text><text x="18" y="27" font-size="12" font-weight="bold" fill="#b0d8ff" text-anchor="middle" font-family="Liberation Sans">Ps</text></svg>
<svg class="ic" style="left:1085px;top:626px" viewBox="0 0 32 32" width="32" height="32"><path d="M9 1.5h13l6 6v23.5H9z" fill="url(#gpageb)" stroke="#7f9db9" stroke-width="0.8"/><path d="M22 1.5v6h6z" fill="#a8c8ec"/><circle cx="11" cy="17" r="7.5" fill="#f07010"/><circle cx="11" cy="17" r="5.5" fill="#f89838"/><path d="M6 14c2-3 6-4 9-2" stroke="#ffe0b0" stroke-width="1.5" fill="none"/><path d="M11 4c1 2 1 4 0 6" stroke="#f07010" stroke-width="1.5" fill="none"/></svg>
<svg class="ic" style="left:1161px;top:626px" viewBox="0 0 32 32" width="32" height="32"><path d="M5 1.5h16l7 7v22.5H5z" fill="url(#gpageb)" stroke="#7f9db9" stroke-width="0.8"/><path d="M21 1.5v7h7z" fill="#a8c8ec" stroke="#7f9db9" stroke-width="0.8"/><rect x="8" y="8" width="9" height="9" fill="#e01818"/><circle cx="19" cy="17" r="5.5" fill="#1a68d8"/><path d="M11 22h11l-5.5 6z" fill="#20b020"/></svg>
<svg class="ic" style="left:1237px;top:626px" viewBox="0 0 32 32" width="32" height="32"><path d="M5 1.5h16l7 7v22.5H5z" fill="#fff" stroke="#9aa4b0" stroke-width="0.8"/><path d="M21 1.5v7h7" fill="#d8dee6" stroke="#9aa4b0" stroke-width="0.8"/><rect x="8" y="10" width="18" height="13" fill="#fff" stroke="#404858" stroke-width="1"/><rect x="8" y="10" width="18" height="3" fill="#1a3a98"/><path d="M11 18h3M17 18h2M22 18h2" stroke="#d02020" stroke-width="2"/><circle cx="19" cy="18" r="1.5" fill="#2040c0"/><path d="M22 16v4" stroke="#20a030" stroke-width="2"/></svg>
<svg class="ic" style="left:1313px;top:626px" viewBox="0 0 32 32" width="32" height="32"><path d="M5 1.5h16l7 7v22.5H5z" fill="#fff" stroke="#9aa4b0" stroke-width="0.8"/><path d="M21 1.5v7h7" fill="#d8dee6" stroke="#9aa4b0" stroke-width="0.8"/><rect x="8" y="10" width="18" height="13" fill="#fff" stroke="#404858" stroke-width="1"/><rect x="8" y="10" width="18" height="3" fill="#1a3a98"/><path d="M11 18h3M17 18h2M22 18h2" stroke="#d02020" stroke-width="2"/><circle cx="19" cy="18" r="1.5" fill="#2040c0"/><path d="M22 16v4" stroke="#20a030" stroke-width="2"/></svg>
<svg class="ic" style="left:1389px;top:626px" viewBox="0 0 32 32" width="32" height="32"><path d="M5 1.5h16l7 7v22.5H5z" fill="url(#gpageb)" stroke="#7f9db9" stroke-width="0.8"/><path d="M21 1.5v7h7z" fill="#a8c8ec" stroke="#7f9db9" stroke-width="0.8"/><text x="15" y="25" font-size="30" font-weight="bold" fill="#1a88e8" text-anchor="middle" font-family="Liberation Sans">e</text><path d="M4 24c-2 2 2 3 8 0 6-3 12-9 13-14 0-3-2-3-6-1" stroke="#f0b020" stroke-width="2" fill="none"/><g><rect x="0.5" y="21.5" width="9.5" height="9.5" fill="#fff" stroke="#606060" stroke-width="0.6"/><path d="M3 29.5c0-3.5 1.5-5.5 4-5.5" stroke="#000" stroke-width="1.8" fill="none"/><path d="M5.8 22.3l3.2 1.5-1.8 2.8z" fill="#000"/></g></svg>
<svg class="ic" style="left:1465px;top:626px" viewBox="0 0 32 32" width="32" height="32"><path d="M5 1.5h16l7 7v22.5H5z" fill="#fff" stroke="#9aa4b0" stroke-width="0.8"/><path d="M21 1.5v7h7" fill="#d8dee6" stroke="#9aa4b0" stroke-width="0.8"/><rect x="8" y="10" width="18" height="13" fill="#fff" stroke="#404858" stroke-width="1"/><rect x="8" y="10" width="18" height="3" fill="#1a3a98"/><path d="M11 18h3M17 18h2M22 18h2" stroke="#d02020" stroke-width="2"/><circle cx="19" cy="18" r="1.5" fill="#2040c0"/><path d="M22 16v4" stroke="#20a030" stroke-width="2"/></svg>
<svg class="ic" style="left:1541px;top:626px" viewBox="0 0 32 32" width="32" height="32"><path d="M5 1.5h16l7 7v22.5H5z" fill="#fff" stroke="#9aa4b0" stroke-width="0.8"/><path d="M21 1.5v7h7" fill="#d8dee6" stroke="#9aa4b0" stroke-width="0.8"/><path d="M9 10.5l11-1.5 2 13-11 1.5z" fill="#30a8e8"/><path d="M9 10.5l11-1.5 .5 3-11 1.5z" fill="#68c8f8"/></svg>
<svg class="ic" style="left:1617px;top:626px" viewBox="0 0 32 32" width="32" height="32"><path d="M7.5 1h17l7 7v22.5H7.5z" fill="url(#gpageb)" stroke="#7f9db9" stroke-width="0.8"/><path d="M24.5 1v7h7z" fill="#a8c8ec" stroke="#7f9db9" stroke-width="0.8"/><path d="M11 21h17M11 24h17M11 27h13M20 12h8M20 15h8M20 18h8" stroke="#9cb4d8" stroke-width="1"/><rect x="2" y="3" width="15.5" height="15" fill="#2a5cc0" stroke="#1a3a80" stroke-width="0.8"/><path d="M2.5 3.5h14.5v4H2.5z" fill="#5a8ae0" opacity="0.6"/><path d="M4.5 6l2.2 9 2.8-7 2.8 7 2.2-9" stroke="#fff" stroke-width="1.8" fill="none"/></svg>
<svg class="ic" style="left:933px;top:704px" viewBox="0 0 32 32" width="32" height="32"><path d="M5 1.5h16l7 7v22.5H5z" fill="url(#gpageb)" stroke="#7f9db9" stroke-width="0.8"/><path d="M21 1.5v7h7z" fill="#a8c8ec" stroke="#7f9db9" stroke-width="0.8"/><rect x="8" y="6.5" width="17" height="18.5" fill="url(#gjpg)"/><path d="M12 10c3-1 5 1 5 4 0 4-2 6-2 11h-5c0-5 0-8 1-11z" fill="#f8d0a0" opacity="0.55"/><path d="M19 8h5v6h-5z" fill="#ffd080" opacity="0.5"/></svg>
<svg class="ic" style="left:1009px;top:704px" viewBox="0 0 32 32" width="32" height="32"><path d="M5 1.5h16l7 7v22.5H5z" fill="url(#gpageb)" stroke="#7f9db9" stroke-width="0.8"/><path d="M21 1.5v7h7z" fill="#a8c8ec" stroke="#7f9db9" stroke-width="0.8"/><text x="15" y="25" font-size="30" font-weight="bold" fill="#1a88e8" text-anchor="middle" font-family="Liberation Sans">e</text><path d="M4 24c-2 2 2 3 8 0 6-3 12-9 13-14 0-3-2-3-6-1" stroke="#f0b020" stroke-width="2" fill="none"/><g><rect x="0.5" y="21.5" width="9.5" height="9.5" fill="#fff" stroke="#606060" stroke-width="0.6"/><path d="M3 29.5c0-3.5 1.5-5.5 4-5.5" stroke="#000" stroke-width="1.8" fill="none"/><path d="M5.8 22.3l3.2 1.5-1.8 2.8z" fill="#000"/></g></svg>
<svg class="ic" style="left:1085px;top:704px" viewBox="0 0 32 32" width="32" height="32"><path d="M9 1.5h13l6 6v23.5H9z" fill="url(#gpageb)" stroke="#7f9db9" stroke-width="0.8"/><path d="M22 1.5v6h6z" fill="#a8c8ec"/><circle cx="11" cy="17" r="7.5" fill="#f07010"/><circle cx="11" cy="17" r="5.5" fill="#f89838"/><path d="M6 14c2-3 6-4 9-2" stroke="#ffe0b0" stroke-width="1.5" fill="none"/><path d="M11 4c1 2 1 4 0 6" stroke="#f07010" stroke-width="1.5" fill="none"/></svg>
<svg class="ic" style="left:1161px;top:704px" viewBox="0 0 32 32" width="32" height="32"><path d="M5 1.5h16l7 7v22.5H5z" fill="url(#gpageb)" stroke="#7f9db9" stroke-width="0.8"/><path d="M21 1.5v7h7z" fill="#a8c8ec" stroke="#7f9db9" stroke-width="0.8"/><rect x="8" y="8" width="9" height="9" fill="#e01818"/><circle cx="19" cy="17" r="5.5" fill="#1a68d8"/><path d="M11 22h11l-5.5 6z" fill="#20b020"/></svg>
<svg class="ic" style="left:1237px;top:704px" viewBox="0 0 32 32" width="32" height="32"><path d="M5 6.5L6 4.5h7l2 2h13l1 1.5v17l-23 3.5-1-1.5z" fill="url(#gfold)"/><path d="M5.5 27.5L28.5 24.5V8" stroke="#d0ac48" stroke-width="1" fill="none"/><path d="M6 8h8" stroke="#c8b060" stroke-width="1"/><g><rect x="0.5" y="21.5" width="9.5" height="9.5" fill="#fff" stroke="#606060" stroke-width="0.6"/><path d="M3 29.5c0-3.5 1.5-5.5 4-5.5" stroke="#000" stroke-width="1.8" fill="none"/><path d="M5.8 22.3l3.2 1.5-1.8 2.8z" fill="#000"/></g></svg>
<svg class="ic" style="left:1313px;top:704px" viewBox="0 0 32 32" width="32" height="32"><path d="M5 1.5h16l7 7v22.5H5z" fill="#fff" stroke="#9aa4b0" stroke-width="0.8"/><path d="M21 1.5v7h7" fill="#d8dee6" stroke="#9aa4b0" stroke-width="0.8"/><circle cx="16" cy="18" r="7.5" fill="#40b030"/><path d="M12 22c2-6 5-9 8-9-3 1-5 4-6 9" fill="#e8f8e0"/></svg>
<svg class="ic" style="left:1389px;top:704px" viewBox="0 0 32 32" width="32" height="32"><path d="M5 1.5h16l7 7v22.5H5z" fill="#fff" stroke="#9aa4b0" stroke-width="0.8"/><path d="M21 1.5v7h7" fill="#d8dee6" stroke="#9aa4b0" stroke-width="0.8"/><rect x="8" y="10" width="18" height="13" fill="#fff" stroke="#404858" stroke-width="1"/><rect x="8" y="10" width="18" height="3" fill="#1a3a98"/><path d="M11 18h3M17 18h2M22 18h2" stroke="#d02020" stroke-width="2"/><circle cx="19" cy="18" r="1.5" fill="#2040c0"/><path d="M22 16v4" stroke="#20a030" stroke-width="2"/></svg>
<svg class="ic" style="left:1465px;top:704px" viewBox="0 0 32 32" width="32" height="32"><path d="M5 1.5h16l7 7v22.5H5z" fill="#fff" stroke="#9aa4b0" stroke-width="0.8"/><path d="M21 1.5v7h7" fill="#d8dee6" stroke="#9aa4b0" stroke-width="0.8"/><rect x="8" y="10" width="18" height="13" fill="#fff" stroke="#404858" stroke-width="1"/><rect x="8" y="10" width="18" height="3" fill="#1a3a98"/><path d="M11 18h3M17 18h2M22 18h2" stroke="#d02020" stroke-width="2"/><circle cx="19" cy="18" r="1.5" fill="#2040c0"/><path d="M22 16v4" stroke="#20a030" stroke-width="2"/></svg>
<svg class="ic" style="left:1541px;top:704px" viewBox="0 0 32 32" width="32" height="32"><path d="M7.5 1h17l7 7v22.5H7.5z" fill="url(#gpageb)" stroke="#7f9db9" stroke-width="0.8"/><path d="M24.5 1v7h7z" fill="#a8c8ec" stroke="#7f9db9" stroke-width="0.8"/><path d="M11 21h17M11 24h17M11 27h13M20 12h8M20 15h8M20 18h8" stroke="#9cb4d8" stroke-width="1"/><rect x="2" y="3" width="15.5" height="15" fill="#2a5cc0" stroke="#1a3a80" stroke-width="0.8"/><path d="M2.5 3.5h14.5v4H2.5z" fill="#5a8ae0" opacity="0.6"/><path d="M4.5 6l2.2 9 2.8-7 2.8 7 2.2-9" stroke="#fff" stroke-width="1.8" fill="none"/></svg>
<svg class="ic" style="left:1617px;top:704px" viewBox="0 0 32 32" width="32" height="32"><path d="M7.5 1h17l7 7v22.5H7.5z" fill="url(#gpageb)" stroke="#7f9db9" stroke-width="0.8"/><path d="M24.5 1v7h7z" fill="#a8c8ec" stroke="#7f9db9" stroke-width="0.8"/><path d="M11 21h17M11 24h17M11 27h13M20 12h8M20 15h8M20 18h8" stroke="#9cb4d8" stroke-width="1"/><rect x="2" y="3" width="15.5" height="15" fill="#2a5cc0" stroke="#1a3a80" stroke-width="0.8"/><path d="M2.5 3.5h14.5v4H2.5z" fill="#5a8ae0" opacity="0.6"/><path d="M4.5 6l2.2 9 2.8-7 2.8 7 2.2-9" stroke="#fff" stroke-width="1.8" fill="none"/></svg>
<svg class="ic" style="left:933px;top:782px" viewBox="0 0 32 32" width="32" height="32"><path d="M5 1.5h16l7 7v22.5H5z" fill="url(#gpageb)" stroke="#7f9db9" stroke-width="0.8"/><path d="M21 1.5v7h7z" fill="#a8c8ec" stroke="#7f9db9" stroke-width="0.8"/><rect x="8" y="6.5" width="17" height="18.5" fill="url(#gjpg)"/><path d="M12 10c3-1 5 1 5 4 0 4-2 6-2 11h-5c0-5 0-8 1-11z" fill="#f8d0a0" opacity="0.55"/><path d="M19 8h5v6h-5z" fill="#ffd080" opacity="0.5"/></svg>
<svg class="ic" style="left:1009px;top:782px" viewBox="0 0 32 32" width="32" height="32"><path d="M5 1.5h16l7 7v22.5H5z" fill="url(#gpageb)" stroke="#7f9db9" stroke-width="0.8"/><path d="M21 1.5v7h7z" fill="#a8c8ec" stroke="#7f9db9" stroke-width="0.8"/><rect x="8" y="6.5" width="17" height="18.5" fill="url(#gjpg)"/><path d="M12 10c3-1 5 1 5 4 0 4-2 6-2 11h-5c0-5 0-8 1-11z" fill="#f8d0a0" opacity="0.55"/><path d="M19 8h5v6h-5z" fill="#ffd080" opacity="0.5"/></svg>
<svg class="ic" style="left:1085px;top:782px" viewBox="0 0 32 32" width="32" height="32"><path d="M9 1.5h13l6 6v23.5H9z" fill="url(#gpageb)" stroke="#7f9db9" stroke-width="0.8"/><path d="M22 1.5v6h6z" fill="#a8c8ec"/><circle cx="11" cy="17" r="7.5" fill="#f07010"/><circle cx="11" cy="17" r="5.5" fill="#f89838"/><path d="M6 14c2-3 6-4 9-2" stroke="#ffe0b0" stroke-width="1.5" fill="none"/><path d="M11 4c1 2 1 4 0 6" stroke="#f07010" stroke-width="1.5" fill="none"/></svg>
<svg class="ic" style="left:1161px;top:782px" viewBox="0 0 32 32" width="32" height="32"><path d="M5 1.5h16l7 7v22.5H5z" fill="url(#gpageb)" stroke="#7f9db9" stroke-width="0.8"/><path d="M21 1.5v7h7z" fill="#a8c8ec" stroke="#7f9db9" stroke-width="0.8"/><rect x="8" y="8" width="9" height="9" fill="#e01818"/><circle cx="19" cy="17" r="5.5" fill="#1a68d8"/><path d="M11 22h11l-5.5 6z" fill="#20b020"/></svg>
<svg class="ic" style="left:1237px;top:782px" viewBox="0 0 32 32" width="32" height="32"><path d="M5 1.5h16l7 7v22.5H5z" fill="#f0f0f0" stroke="#909090" stroke-width="0.8"/><path d="M4 9l20-5 1 4-20 5z" fill="#202020"/><path d="M8 8l3 3M14 6.5l3 3M20 5l3 3" stroke="#fff" stroke-width="1.3"/><rect x="6" y="13" width="19" height="14" fill="#fff" stroke="#202020"/><rect x="8" y="16" width="4" height="9" fill="#e02828"/><rect x="13" y="16" width="4" height="9" fill="#2850d8"/><rect x="18" y="16" width="4" height="9" fill="#28a840"/></svg>
<svg class="ic" style="left:1313px;top:782px" viewBox="0 0 32 32" width="32" height="32"><path d="M5 1.5h16l7 7v22.5H5z" fill="#f0f0f0" stroke="#909090" stroke-width="0.8"/><path d="M4 9l20-5 1 4-20 5z" fill="#202020"/><path d="M8 8l3 3M14 6.5l3 3M20 5l3 3" stroke="#fff" stroke-width="1.3"/><rect x="6" y="13" width="19" height="14" fill="#fff" stroke="#202020"/><rect x="8" y="16" width="4" height="9" fill="#e02828"/><rect x="13" y="16" width="4" height="9" fill="#2850d8"/><rect x="18" y="16" width="4" height="9" fill="#28a840"/></svg>
<svg class="ic" style="left:1389px;top:782px" viewBox="0 0 32 32" width="32" height="32"><path d="M5 1.5h16l7 7v22.5H5z" fill="#f0f0f0" stroke="#909090" stroke-width="0.8"/><path d="M4 9l20-5 1 4-20 5z" fill="#202020"/><path d="M8 8l3 3M14 6.5l3 3M20 5l3 3" stroke="#fff" stroke-width="1.3"/><rect x="6" y="13" width="19" height="14" fill="#fff" stroke="#202020"/><rect x="8" y="16" width="4" height="9" fill="#e02828"/><rect x="13" y="16" width="4" height="9" fill="#2850d8"/><rect x="18" y="16" width="4" height="9" fill="#28a840"/></svg>
<svg class="ic" style="left:1465px;top:782px" viewBox="0 0 32 32" width="32" height="32"><path d="M7.5 1h17l7 7v22.5H7.5z" fill="url(#gpageb)" stroke="#7f9db9" stroke-width="0.8"/><path d="M24.5 1v7h7z" fill="#a8c8ec" stroke="#7f9db9" stroke-width="0.8"/><path d="M11 21h17M11 24h17M11 27h17M16 19v10M21 19v10M20 12h8M20 15h8" stroke="#9cb4d8" stroke-width="1"/><rect x="2" y="3" width="15.5" height="15" fill="#48a048" stroke="#186828" stroke-width="0.8"/><path d="M2.5 3.5h14.5v4H2.5z" fill="#90d090" opacity="0.6"/><path d="M6 6.5l7.5 8.5M13.5 6.5l-7.5 8.5" stroke="#0a5020" stroke-width="2.4"/><path d="M6 6.5l7.5 8.5M13.5 6.5l-7.5 8.5" stroke="#fff" stroke-width="0.8"/></svg>
<svg class="ic" style="left:1541px;top:782px" viewBox="0 0 32 32" width="32" height="32"><path d="M7.5 1h17l7 7v22.5H7.5z" fill="url(#gpageb)" stroke="#7f9db9" stroke-width="0.8"/><path d="M24.5 1v7h7z" fill="#a8c8ec" stroke="#7f9db9" stroke-width="0.8"/><path d="M11 21h17M11 24h17M11 27h13M20 12h8M20 15h8M20 18h8" stroke="#9cb4d8" stroke-width="1"/><rect x="2" y="3" width="15.5" height="15" fill="#2a5cc0" stroke="#1a3a80" stroke-width="0.8"/><path d="M2.5 3.5h14.5v4H2.5z" fill="#5a8ae0" opacity="0.6"/><path d="M4.5 6l2.2 9 2.8-7 2.8 7 2.2-9" stroke="#fff" stroke-width="1.8" fill="none"/></svg>
<svg class="ic" style="left:1617px;top:782px" viewBox="0 0 32 32" width="32" height="32"><path d="M14 1.5h9c5 0 9 4 9 9v19.5H8V12z" fill="#f4f8fa"/><path d="M23 1.5c5 0 9 4 9 9h-9z" fill="#2a6a80"/><path d="M8 11h5.5v19H8z" fill="#1a4070"/><path d="M8 11c2 6 3 12 5.5 18" stroke="#3a78a8" stroke-width="1.2" fill="none"/><path d="M1 14c4-5 10-7 16-6 3 0 5-1 7-3-3 4-6 5-9 5-5 0-10 1-14 4z" fill="#d8e2ea" stroke="#000" stroke-width="0.7"/><path d="M4 8c4-5 10-7 15-6 2 0 4 0 6-2-2 4-5 5-8 5-5 0-9 1-13 3z" fill="#c8d4de" stroke="#000" stroke-width="0.7"/><path d="M16.5 15.7h13M16.5 20.8h11M16.5 25.8h13" stroke="#2a5a78" stroke-width="1.9"/></svg>
<svg class="ic" style="left:933px;top:860px" viewBox="0 0 32 32" width="32" height="32"><path d="M5 1.5h16l7 7v22.5H5z" fill="url(#gpageb)" stroke="#7f9db9" stroke-width="0.8"/><path d="M21 1.5v7h7z" fill="#a8c8ec" stroke="#7f9db9" stroke-width="0.8"/><rect x="8" y="6.5" width="17" height="18.5" fill="url(#gjpg)"/><path d="M12 10c3-1 5 1 5 4 0 4-2 6-2 11h-5c0-5 0-8 1-11z" fill="#f8d0a0" opacity="0.55"/><path d="M19 8h5v6h-5z" fill="#ffd080" opacity="0.5"/></svg>
<svg class="ic" style="left:1009px;top:860px" viewBox="0 0 32 32" width="32" height="32"><path d="M6 3h19l6 5H11z" fill="#7a3050"/><path d="M10 8h21v5.5H10z" fill="#e060b8"/><path d="M10 11.5h21v2H10z" fill="#902070"/><path d="M10 14h21v5.5H10z" fill="#3858e0"/><path d="M10 17.5h21v2H10z" fill="#182890"/><path d="M10 20h21v7H10z" fill="#38c048"/><path d="M10 25h21v2H10z" fill="#107020"/><path d="M1 5l9 3v19l-9-3z" fill="#e8e8e8"/><path d="M2 9l7 3M2 14l7 3M2 19l7 3" stroke="#606060" stroke-width="1.3"/><path d="M17 3h4v25h-4z" fill="#b08848"/><circle cx="19" cy="14" r="3" fill="none" stroke="#d0d0d0" stroke-width="1.4"/></svg>
<svg class="ic" style="left:1085px;top:860px" viewBox="0 0 32 32" width="32" height="32"><path d="M9 1.5h13l6 6v23.5H9z" fill="url(#gpageb)" stroke="#7f9db9" stroke-width="0.8"/><path d="M22 1.5v6h6z" fill="#a8c8ec"/><circle cx="11" cy="17" r="7.5" fill="#f07010"/><circle cx="11" cy="17" r="5.5" fill="#f89838"/><path d="M6 14c2-3 6-4 9-2" stroke="#ffe0b0" stroke-width="1.5" fill="none"/><path d="M11 4c1 2 1 4 0 6" stroke="#f07010" stroke-width="1.5" fill="none"/></svg>
<svg class="ic" style="left:1161px;top:860px" viewBox="0 0 32 32" width="32" height="32"><path d="M5 1.5h16l7 7v22.5H5z" fill="url(#gpageb)" stroke="#7f9db9" stroke-width="0.8"/><path d="M21 1.5v7h7z" fill="#a8c8ec" stroke="#7f9db9" stroke-width="0.8"/><rect x="8" y="8" width="9" height="9" fill="#e01818"/><circle cx="19" cy="17" r="5.5" fill="#1a68d8"/><path d="M11 22h11l-5.5 6z" fill="#20b020"/></svg>
<svg class="ic" style="left:1237px;top:860px" viewBox="0 0 32 32" width="32" height="32"><path d="M5 1.5h16l7 7v22.5H5z" fill="url(#gpageb)" stroke="#7f9db9" stroke-width="0.8"/><path d="M21 1.5v7h7z" fill="#a8c8ec" stroke="#7f9db9" stroke-width="0.8"/><path d="M8 24l11-12 5 4-11 12z" fill="#f0b030" stroke="#a06010" stroke-width="0.8"/><path d="M11 21l5 3M14 18l5 3M17 15l4 3" stroke="#906018" stroke-width="1.2"/></svg>
<svg class="ic" style="left:1313px;top:860px" viewBox="0 0 32 32" width="32" height="32"><path d="M5 1.5h16l7 7v22.5H5z" fill="url(#gpageb)" stroke="#7f9db9" stroke-width="0.8"/><path d="M21 1.5v7h7z" fill="#a8c8ec" stroke="#7f9db9" stroke-width="0.8"/><path d="M8 24l11-12 5 4-11 12z" fill="#f0b030" stroke="#a06010" stroke-width="0.8"/><path d="M11 21l5 3M14 18l5 3M17 15l4 3" stroke="#906018" stroke-width="1.2"/></svg>
<svg class="ic" style="left:1389px;top:860px" viewBox="0 0 32 32" width="32" height="32"><path d="M5 1.5h16l7 7v22.5H5z" fill="url(#gpageb)" stroke="#7f9db9" stroke-width="0.8"/><path d="M21 1.5v7h7z" fill="#a8c8ec" stroke="#7f9db9" stroke-width="0.8"/><path d="M8 24l11-12 5 4-11 12z" fill="#f0b030" stroke="#a06010" stroke-width="0.8"/><path d="M11 21l5 3M14 18l5 3M17 15l4 3" stroke="#906018" stroke-width="1.2"/></svg>
<svg class="ic" style="left:1465px;top:860px" viewBox="0 0 32 32" width="32" height="32"><path d="M7.5 1h17l7 7v22.5H7.5z" fill="url(#gpageb)" stroke="#7f9db9" stroke-width="0.8"/><path d="M24.5 1v7h7z" fill="#a8c8ec" stroke="#7f9db9" stroke-width="0.8"/><path d="M11 21h17M11 24h17M11 27h17M16 19v10M21 19v10M20 12h8M20 15h8" stroke="#9cb4d8" stroke-width="1"/><rect x="2" y="3" width="15.5" height="15" fill="#48a048" stroke="#186828" stroke-width="0.8"/><path d="M2.5 3.5h14.5v4H2.5z" fill="#90d090" opacity="0.6"/><path d="M6 6.5l7.5 8.5M13.5 6.5l-7.5 8.5" stroke="#0a5020" stroke-width="2.4"/><path d="M6 6.5l7.5 8.5M13.5 6.5l-7.5 8.5" stroke="#fff" stroke-width="0.8"/></svg>
<svg class="ic" style="left:1541px;top:860px" viewBox="0 0 32 32" width="32" height="32"><path d="M7.5 1h17l7 7v22.5H7.5z" fill="url(#gpageb)" stroke="#7f9db9" stroke-width="0.8"/><path d="M24.5 1v7h7z" fill="#a8c8ec" stroke="#7f9db9" stroke-width="0.8"/><path d="M11 21h17M11 24h17M11 27h13M20 12h8M20 15h8M20 18h8" stroke="#9cb4d8" stroke-width="1"/><rect x="2" y="3" width="15.5" height="15" fill="#2a5cc0" stroke="#1a3a80" stroke-width="0.8"/><path d="M2.5 3.5h14.5v4H2.5z" fill="#5a8ae0" opacity="0.6"/><path d="M4.5 6l2.2 9 2.8-7 2.8 7 2.2-9" stroke="#fff" stroke-width="1.8" fill="none"/></svg>
<svg class="ic" style="left:1617px;top:860px" viewBox="0 0 32 32" width="32" height="32"><path d="M7.5 1h17l7 7v22.5H7.5z" fill="url(#gpageb)" stroke="#7f9db9" stroke-width="0.8"/><path d="M24.5 1v7h7z" fill="#a8c8ec" stroke="#7f9db9" stroke-width="0.8"/><path d="M11 21h17M11 24h17M11 27h17M16 19v10M21 19v10M20 12h8M20 15h8" stroke="#9cb4d8" stroke-width="1"/><rect x="2" y="3" width="15.5" height="15" fill="#48a048" stroke="#186828" stroke-width="0.8"/><path d="M2.5 3.5h14.5v4H2.5z" fill="#90d090" opacity="0.6"/><path d="M6 6.5l7.5 8.5M13.5 6.5l-7.5 8.5" stroke="#0a5020" stroke-width="2.4"/><path d="M6 6.5l7.5 8.5M13.5 6.5l-7.5 8.5" stroke="#fff" stroke-width="0.8"/></svg>
<svg class="ic" style="left:933px;top:938px" viewBox="0 0 32 32" width="32" height="32"><path d="M5 1.5h16l7 7v22.5H5z" fill="url(#gpageb)" stroke="#7f9db9" stroke-width="0.8"/><path d="M21 1.5v7h7z" fill="#a8c8ec" stroke="#7f9db9" stroke-width="0.8"/><rect x="8" y="6.5" width="17" height="18.5" fill="url(#gjpg)"/><path d="M12 10c3-1 5 1 5 4 0 4-2 6-2 11h-5c0-5 0-8 1-11z" fill="#f8d0a0" opacity="0.55"/><path d="M19 8h5v6h-5z" fill="#ffd080" opacity="0.5"/></svg>
<svg class="ic" style="left:1389px;top:938px" viewBox="0 0 32 32" width="32" height="32"><path d="M7.5 1h17l7 7v22.5H7.5z" fill="url(#gpageb)" stroke="#7f9db9" stroke-width="0.8"/><path d="M24.5 1v7h7z" fill="#a8c8ec" stroke="#7f9db9" stroke-width="0.8"/><path d="M11 21h17M11 24h17M11 27h17M16 19v10M21 19v10M20 12h8M20 15h8" stroke="#9cb4d8" stroke-width="1"/><rect x="2" y="3" width="15.5" height="15" fill="#48a048" stroke="#186828" stroke-width="0.8"/><path d="M2.5 3.5h14.5v4H2.5z" fill="#90d090" opacity="0.6"/><path d="M6 6.5l7.5 8.5M13.5 6.5l-7.5 8.5" stroke="#0a5020" stroke-width="2.4"/><path d="M6 6.5l7.5 8.5M13.5 6.5l-7.5 8.5" stroke="#fff" stroke-width="0.8"/></svg>
<svg class="ic" style="left:1465px;top:938px" viewBox="0 0 32 32" width="32" height="32"><path d="M14 1.5h9c5 0 9 4 9 9v19.5H8V12z" fill="#f4f8fa"/><path d="M23 1.5c5 0 9 4 9 9h-9z" fill="#90b830"/><path d="M8 11h5.5v19H8z" fill="#1a4070"/><path d="M8 11c2 6 3 12 5.5 18" stroke="#3a78a8" stroke-width="1.2" fill="none"/><path d="M1 14c4-5 10-7 16-6 3 0 5-1 7-3-3 4-6 5-9 5-5 0-10 1-14 4z" fill="#d8e2ea" stroke="#000" stroke-width="0.7"/><path d="M4 8c4-5 10-7 15-6 2 0 4 0 6-2-2 4-5 5-8 5-5 0-9 1-13 3z" fill="#c8d4de" stroke="#000" stroke-width="0.7"/><rect x="16" y="14" width="13" height="13" fill="#80b020"/><path d="M16 20.5h13M22.5 14v13" stroke="#f0f8d0" stroke-width="1.6"/></svg>
<svg class="ic" style="left:1541px;top:938px" viewBox="0 0 32 32" width="32" height="32"><path d="M7.5 1h17l7 7v22.5H7.5z" fill="url(#gpageb)" stroke="#7f9db9" stroke-width="0.8"/><path d="M24.5 1v7h7z" fill="#a8c8ec" stroke="#7f9db9" stroke-width="0.8"/><path d="M11 21h17M11 24h17M11 27h17M16 19v10M21 19v10M20 12h8M20 15h8" stroke="#9cb4d8" stroke-width="1"/><rect x="2" y="3" width="15.5" height="15" fill="#48a048" stroke="#186828" stroke-width="0.8"/><path d="M2.5 3.5h14.5v4H2.5z" fill="#90d090" opacity="0.6"/><path d="M6 6.5l7.5 8.5M13.5 6.5l-7.5 8.5" stroke="#0a5020" stroke-width="2.4"/><path d="M6 6.5l7.5 8.5M13.5 6.5l-7.5 8.5" stroke="#fff" stroke-width="0.8"/></svg>
<svg class="ic" style="left:1617px;top:938px" viewBox="0 0 32 32" width="32" height="32"><path d="M14 1.5h9c5 0 9 4 9 9v19.5H8V12z" fill="#f4f8fa"/><path d="M23 1.5c5 0 9 4 9 9h-9z" fill="#90b830"/><path d="M8 11h5.5v19H8z" fill="#1a4070"/><path d="M8 11c2 6 3 12 5.5 18" stroke="#3a78a8" stroke-width="1.2" fill="none"/><path d="M1 14c4-5 10-7 16-6 3 0 5-1 7-3-3 4-6 5-9 5-5 0-10 1-14 4z" fill="#d8e2ea" stroke="#000" stroke-width="0.7"/><path d="M4 8c4-5 10-7 15-6 2 0 4 0 6-2-2 4-5 5-8 5-5 0-9 1-13 3z" fill="#c8d4de" stroke="#000" stroke-width="0.7"/><rect x="16" y="14" width="13" height="13" fill="#80b020"/><path d="M16 20.5h13M22.5 14v13" stroke="#f0f8d0" stroke-width="1.6"/></svg>
<div id="labs"><div class="lb" style="left:0px;top:39px">Мои<br>документы</div>
<div class="lb" style="left:76px;top:39px">Google<br>Chrome</div>
<div class="lb" style="left:152px;top:39px">Mozilla Firefox</div>
<div class="lb" style="left:228px;top:39px">Opera</div>
<div class="lb" style="left:304px;top:39px">Osleg.mht</div>
<div class="lb" style="left:380px;top:39px">Default.rdp</div>
<div class="lb" style="left:0px;top:117px">Мой<br>компьютер</div>
<div class="lb" style="left:76px;top:117px">Far Manager</div>
<div class="lb" style="left:152px;top:117px">mIRC</div>
<div class="lb" style="left:228px;top:117px">QIP 2005</div>
<div class="lb" style="left:0px;top:195px">Сетевое<br>окружение</div>
<div class="lb" style="left:76px;top:195px">Light Alloy</div>
<div class="lb" style="left:152px;top:195px">Winamp</div>
<div class="lb" style="left:0px;top:273px">Корзина</div>
<div class="lb" style="left:76px;top:273px">SiteEdit-Free</div>
<div class="lb" style="left:152px;top:273px">PC Player</div>
<div class="lb" style="left:0px;top:351px">WebMoney<br>Keeper Clas...</div>
<div class="lb" style="left:76px;top:351px">UltraISO</div>
<div class="lb" style="left:152px;top:351px">VLC media<br>player</div>
<div class="lb" style="left:0px;top:429px">Counter-Strike<br>1.6</div>
<div class="lb" style="left:76px;top:429px">Nero<br>StartSmart</div>
<div class="lb" style="left:152px;top:429px">BitComet</div>
<div class="lb" style="left:228px;top:429px">TicketBench<br>Plus</div>
<div class="lb" style="left:0px;top:507px">NFSpeed-Shift</div>
<div class="lb" style="left:76px;top:507px">AVIConverter</div>
<div class="lb" style="left:152px;top:507px">OpenOffice....<br>3.0</div>
<div class="lb" style="left:228px;top:507px">PrintersBench<br>Plus</div>
<div class="lb" style="left:0px;top:585px">Magic.ru beta</div>
<div class="lb" style="left:76px;top:585px">CCleaner</div>
<div class="lb" style="left:152px;top:585px">Recovery<br>Manager</div>
<div class="lb" style="left:228px;top:585px">Билеты (от<br>Алексея) в...</div>
<div class="lb" style="left:0px;top:663px">I-Fluid</div>
<div class="lb" style="left:76px;top:663px">Ontrack Crisis<br>Center</div>
<div class="lb" style="left:152px;top:663px">TicketCreator</div>
<div class="lb" style="left:0px;top:741px">World of<br>Warcraft</div>
<div class="lb" style="left:76px;top:741px">InfraRecorder</div>
<div class="lb" style="left:152px;top:741px">bilet11.exe</div>
<div class="lb" style="left:0px;top:819px">WAR.RU</div>
<div class="lb" style="left:76px;top:819px">Adobe Reader<br>9</div>
<div class="lb" style="left:152px;top:819px">Adobe<br>Dreamweav...</div>
<div class="lb" style="left:0px;top:897px">SpeedSim</div>
<div class="lb" style="left:76px;top:897px">book_html.exe</div>
<div class="lb" style="left:152px;top:897px">HTMLCol.exe</div>
<div class="lb" style="left:228px;top:897px">tc500setup....</div>
<div class="lb" style="left:304px;top:897px">tbplus_win....</div>
<div class="lb" style="left:380px;top:897px">Opera_1000....</div>
<div class="lb" style="left:456px;top:897px">tbplus.exe</div>
<div class="lb" style="left:532px;top:897px">ccsetup219....</div>
<div class="lb" style="left:608px;top:897px">Setup.exe</div>
<div class="lb" style="left:0px;top:975px">Ярлык для<br>AutoCombats</div>
<div class="lb" style="left:76px;top:975px">GIMP 2</div>
<div class="lb" style="left:152px;top:975px">EasyRecovery<br>Professional</div>
<div class="lb" style="left:228px;top:975px">everestcor....</div>
<div class="lb" style="left:304px;top:975px">erprot.exe</div>
<div class="lb" style="left:380px;top:975px">photorescu....</div>
<div class="lb" style="left:456px;top:975px">magic-setu....</div>
<div class="lb" style="left:532px;top:975px">pcplayer_s....</div>
<div class="lb" style="left:608px;top:975px">launch.exe</div>
<div class="lb" style="left:911px;top:39px">Archive.rar</div>
<div class="lb" style="left:987px;top:39px">1.rar</div>
<div class="lb" style="left:1063px;top:39px">док-ты</div>
<div class="lb" style="left:1139px;top:39px">maple4_ru</div>
<div class="lb" style="left:1215px;top:39px">Свидет</div>
<div class="lb" style="left:1291px;top:39px">федеральные<br>законы</div>
<div class="lb" style="left:1367px;top:39px">мясо</div>
<div class="lb" style="left:1443px;top:39px">kitaes.pdf</div>
<div class="lb" style="left:1519px;top:39px">perumov.txt</div>
<div class="lb" style="left:1595px;top:39px">Текстовый<br>документ ...</div>
<div class="lb" style="left:911px;top:117px">Wireless_At...</div>
<div class="lb" style="left:987px;top:117px">11.rar</div>
<div class="lb" style="left:1063px;top:117px">qumo</div>
<div class="lb" style="left:1139px;top:117px">Page Promoter</div>
<div class="lb" style="left:1215px;top:117px">рис комп</div>
<div class="lb" style="left:1291px;top:117px">макет</div>
<div class="lb" style="left:1367px;top:117px">САЙТ</div>
<div class="lb" style="left:1443px;top:117px">IM-204W-E...</div>
<div class="lb" style="left:1519px;top:117px">Текстовый<br>докумен...</div>
<div class="lb" style="left:1595px;top:117px">Текстовый<br>документ ...</div>
<div class="lb" style="left:911px;top:195px">Portable_On...</div>
<div class="lb" style="left:987px;top:195px">!!!.zip</div>
<div class="lb" style="left:1063px;top:195px">CAIT GG</div>
<div class="lb" style="left:1139px;top:195px">zelen</div>
<div class="lb" style="left:1215px;top:195px">раскрт</div>
<div class="lb" style="left:1291px;top:195px">Новая папка<br>(2)</div>
<div class="lb" style="left:1367px;top:195px">МАТЕРИАЛ<br>РИСУНКИ</div>
<div class="lb" style="left:1443px;top:195px">5.pdf</div>
<div class="lb" style="left:1519px;top:195px">Текстовый<br>докумен...</div>
<div class="lb" style="left:1595px;top:195px">Текстовый<br>документ ...</div>
<div class="lb" style="left:911px;top:273px">IM204W.rar</div>
<div class="lb" style="left:987px;top:273px">windows_fl...</div>
<div class="lb" style="left:1063px;top:273px">WebSklad....</div>
<div class="lb" style="left:1139px;top:273px">adobe_flas...</div>
<div class="lb" style="left:1215px;top:273px">Новая папка<br>(5)</div>
<div class="lb" style="left:1291px;top:273px">хрень</div>
<div class="lb" style="left:1367px;top:273px">Новая папка<br>(4)</div>
<div class="lb" style="left:1443px;top:273px">IM-204W-EN<br>(1).pdf</div>
<div class="lb" style="left:1519px;top:273px">Текстовый<br>докумен...</div>
<div class="lb" style="left:1595px;top:273px">Документ в<br>формате ...</div>
<div class="lb" style="left:911px;top:351px">SDC11561.JPG</div>
<div class="lb" style="left:987px;top:351px">muz.tkb</div>
<div class="lb" style="left:1063px;top:351px">card610_dri...</div>
<div class="lb" style="left:1139px;top:351px">intkyrs</div>
<div class="lb" style="left:1215px;top:351px">dir</div>
<div class="lb" style="left:1291px;top:351px">сайт<br>наполнение</div>
<div class="lb" style="left:1367px;top:351px">Новая папка<br>(3)</div>
<div class="lb" style="left:1443px;top:351px">счет_17759...</div>
<div class="lb" style="left:1519px;top:351px">даше.txt</div>
<div class="lb" style="left:1595px;top:351px">резюме.odt</div>
<div class="lb" style="left:911px;top:429px">scan.jpg</div>
<div class="lb" style="left:1063px;top:429px">web</div>
<div class="lb" style="left:1139px;top:429px">IM204W</div>
<div class="lb" style="left:1215px;top:429px">3232</div>
<div class="lb" style="left:1291px;top:429px">никс</div>
<div class="lb" style="left:1367px;top:429px">картинки</div>
<div class="lb" style="left:1443px;top:429px">paymentSa...</div>
<div class="lb" style="left:1519px;top:429px">Текстовый<br>документ.txt</div>
<div class="lb" style="left:1595px;top:429px">change_e-...</div>
<div class="lb" style="left:911px;top:507px">SDC11560.JPG</div>
<div class="lb" style="left:1063px;top:507px">101MSDCF</div>
<div class="lb" style="left:1139px;top:507px">Marina</div>
<div class="lb" style="left:1215px;top:507px">bios</div>
<div class="lb" style="left:1291px;top:507px">азебки</div>
<div class="lb" style="left:1367px;top:507px">Новая папка</div>
<div class="lb" style="left:1443px;top:507px">gg.html</div>
<div class="lb" style="left:1519px;top:507px">12.txt</div>
<div class="lb" style="left:1595px;top:507px">Анкета.doc</div>
<div class="lb" style="left:911px;top:585px">ps.jpg</div>
<div class="lb" style="left:1063px;top:585px">domolink</div>
<div class="lb" style="left:1139px;top:585px">Ch15</div>
<div class="lb" style="left:1215px;top:585px">под кнопки</div>
<div class="lb" style="left:1291px;top:585px">Фотка</div>
<div class="lb" style="left:1367px;top:585px">Для игры</div>
<div class="lb" style="left:1443px;top:585px">12.html</div>
<div class="lb" style="left:1519px;top:585px">1.txt</div>
<div class="lb" style="left:1595px;top:585px">Amesco-inv...</div>
<div class="lb" style="left:911px;top:663px">SDC11542.JPG</div>
<div class="lb" style="left:987px;top:663px">FonSite.psd</div>
<div class="lb" style="left:1063px;top:663px">doctor_iboltt...</div>
<div class="lb" style="left:1139px;top:663px">Bulls-16x16....</div>
<div class="lb" style="left:1215px;top:663px">alfgg.dem</div>
<div class="lb" style="left:1291px;top:663px">9-54.bmp</div>
<div class="lb" style="left:1367px;top:663px">примерная<br>программа ...</div>
<div class="lb" style="left:1443px;top:663px">1.FMB</div>
<div class="lb" style="left:1519px;top:663px">915001150...</div>
<div class="lb" style="left:1595px;top:663px">Amesco-inv...</div>
<div class="lb" style="left:911px;top:741px">images.jpeg</div>
<div class="lb" style="left:987px;top:741px">Untitled050....</div>
<div class="lb" style="left:1063px;top:741px">The.Good.T...</div>
<div class="lb" style="left:1139px;top:741px">Trash-Full-1...</div>
<div class="lb" style="left:1215px;top:741px">Ярлык для<br>s05</div>
<div class="lb" style="left:1291px;top:741px">preview.php</div>
<div class="lb" style="left:1367px;top:741px">Заказ<br>N92548091...</div>
<div class="lb" style="left:1443px;top:741px">Dekupag.htm</div>
<div class="lb" style="left:1519px;top:741px">Документ в<br>формате R...</div>
<div class="lb" style="left:1595px;top:741px">Amesco-inv...</div>
<div class="lb" style="left:911px;top:819px">шетаева.jpg</div>
<div class="lb" style="left:987px;top:819px">210x148__na<br>podtverjden...</div>
<div class="lb" style="left:1063px;top:819px">USBreanimator<br>v2.0 -- 4 Wi...</div>
<div class="lb" style="left:1139px;top:819px">Mars-16x1...</div>
<div class="lb" style="left:1215px;top:819px">SDC11393.avi</div>
<div class="lb" style="left:1291px;top:819px">Gamer.2009...</div>
<div class="lb" style="left:1367px;top:819px">Gaumep.avi</div>
<div class="lb" style="left:1443px;top:819px">счет.xls</div>
<div class="lb" style="left:1519px;top:819px">RecoveryS...</div>
<div class="lb" style="left:1595px;top:819px">Текстовый<br>документ ...</div>
<div class="lb" style="left:911px;top:897px">SDC11559.JPG</div>
<div class="lb" style="left:987px;top:897px">4040_tbplu...</div>
<div class="lb" style="left:1063px;top:897px">Transforme...</div>
<div class="lb" style="left:1139px;top:897px">Mars-512x5...</div>
<div class="lb" style="left:1215px;top:897px">mark_berne...</div>
<div class="lb" style="left:1291px;top:897px">Microsoft<br>Wave Sou...</div>
<div class="lb" style="left:1367px;top:897px">BANDERAS....</div>
<div class="lb" style="left:1443px;top:897px">amesco.xls</div>
<div class="lb" style="left:1519px;top:897px">prog1.doc</div>
<div class="lb" style="left:1595px;top:897px">NOVEXCO - LC<br>BOOKING S...</div>
<div class="lb" style="left:911px;top:975px">transfer_am...</div>
<div class="lb" style="left:1367px;top:975px">СчетПрофо...<br>(2).xls</div>
<div class="lb" style="left:1443px;top:975px">Электронная<br>таблица O...</div>
<div class="lb" style="left:1519px;top:975px">NOVEXCO -<br>CASH BO...</div>
<div class="lb" style="left:1595px;top:975px">Электронная<br>таблица O...</div></div>
<div style="position:absolute;left:0;top:1022px;width:1680px;height:28px;background:#d4d0c8;border-top:1px solid #e8e6e0;box-shadow:inset 0 1px 0 #fff"></div>
<div class="bt" style="left:2px;width:52px"><svg style="position:absolute;left:1px;top:2px" width="17" height="16" viewBox="0 0 16 15"><path d="M1 2c2-1 4-1 6 0l-1 5c-2-1-4-1-6 0z" fill="#e8582a"/><path d="M8 2c2 1 4 1 7 0l-1 5c-2 1-4 1-7 0z" fill="#4cb040"/><path d="M0 8c2-1 4-1 6 0l-1 5c-2-1-4-1-6 0z" fill="#2a70d8"/><path d="M7 8c2 1 4 1 7 0l-1 5c-2 1-4 1-7 0z" fill="#f8c020"/></svg><span style="position:absolute;left:19px;top:4px;font-weight:bold;font-size:11.5px">Пуск</span></div>
<div style="position:absolute;left:55px;top:1026px;width:1px;height:22px;background:#808080;border-right:1px solid #fff"></div>
<div style="position:absolute;left:60px;top:1027px;width:2px;height:20px;border-left:1px solid #fff;border-right:1px solid #808080;"></div>
<div class="bt" style="left:68px;width:139px"><svg style="position:absolute;left:2px;top:2px" width="16" height="16" viewBox="0 0 16 16"><path d="M1 3l1-1h5l1.5 1.5H15v11H1z" fill="#d8a830"/><path d="M1 6.5l2-1.5h13l-1 9.5H1z" fill="#f4d868"/><path d="M2 7h12" stroke="#fff0b0" stroke-width="1"/></svg><span style="position:absolute;left:22px;top:4px;font-size:11px;white-space:nowrap">soft</span></div>
<div class="bt" style="left:209px;width:139px"><svg style="position:absolute;left:2px;top:2px" width="16" height="16" viewBox="0 0 16 16"><path d="M1 3l1-1h5l1.5 1.5H15v11H1z" fill="#d8a830"/><path d="M1 6.5l2-1.5h13l-1 9.5H1z" fill="#f4d868"/><path d="M2 7h12" stroke="#fff0b0" stroke-width="1"/></svg><span style="position:absolute;left:22px;top:4px;font-size:11px;white-space:nowrap">никс</span></div>
<div class="bt" style="left:350px;width:139px"><svg style="position:absolute;left:2px;top:2px" width="16" height="16" viewBox="0 0 16 16"><rect x="1" y="0" width="11" height="10" fill="#e0e8f0"/><rect x="2" y="1" width="9" height="8" fill="#3a98e8"/><rect x="11" y="2" width="4.5" height="11" fill="#b8b8e0"/><ellipse cx="7" cy="13" rx="6" ry="2.5" fill="#d8dce8"/></svg><span style="position:absolute;left:22px;top:4px;font-size:11px;white-space:nowrap">Мой компьютер</span></div>
<div class="bt" style="left:492px;width:139px"><svg style="position:absolute;left:2px;top:2px" width="16" height="16" viewBox="0 0 16 16"><ellipse cx="8" cy="8" rx="6" ry="7" fill="#d01818"/><ellipse cx="8" cy="8" rx="2.5" ry="5" fill="#fff"/></svg><span style="position:absolute;left:22px;top:4px;font-size:11px;white-space:nowrap">фильтрация сообщ...</span></div>
<div class="bt" style="left:633px;width:139px"><svg style="position:absolute;left:2px;top:2px" width="16" height="16" viewBox="0 0 16 16"><rect x="1" y="4" width="14" height="10" fill="#50b030" stroke="#206010"/><rect x="6" y="1" width="4" height="4" fill="#60c040"/></svg><span style="position:absolute;left:22px;top:4px;font-size:11px;white-space:nowrap">[260-451-957] - Ок...</span></div>
<div class="bt" style="left:774px;width:139px"><svg style="position:absolute;left:2px;top:2px" width="16" height="16" viewBox="0 0 16 16"><circle cx="8" cy="8" r="7" fill="#f07018"/><circle cx="9" cy="7" r="4" fill="#3b78c8"/></svg><span style="position:absolute;left:22px;top:4px;font-size:11px;white-space:nowrap">It-green Ремонт ко...</span></div>
<div class="bt" style="left:915px;width:139px"><svg style="position:absolute;left:2px;top:2px" width="16" height="16" viewBox="0 0 16 16"><circle cx="8" cy="8" r="5" fill="none" stroke="#1e90e0" stroke-width="2.5"/><path d="M3 8h10" stroke="#1e90e0" stroke-width="2"/><path d="M1 13c5-1 10-7 14-11" stroke="#e8b020" stroke-width="1.5" fill="none"/></svg><span style="position:absolute;left:22px;top:4px;font-size:11px;white-space:nowrap">СЧЕТ N 773410а от ...</span></div>
<div class="bt" style="left:1056px;width:139px"><svg style="position:absolute;left:2px;top:2px" width="16" height="16" viewBox="0 0 16 16"><rect x="4" y="4" width="11" height="8" fill="#2040a0" stroke="#888"/><circle cx="5" cy="5" r="4" fill="#90a0b0"/></svg><span style="position:absolute;left:22px;top:4px;font-size:11px;white-space:nowrap">Подключение к уд...</span></div>
<div class="bt" style="left:1198px;width:139px"><svg style="position:absolute;left:2px;top:2px" width="16" height="16" viewBox="0 0 16 16"><rect x="0" y="2" width="16" height="12" fill="#10204a"/><rect x="1" y="5" width="14" height="8" fill="#000"/><text x="2" y="11" font-size="6" fill="#fff" font-family="Liberation Mono">C:\</text></svg><span style="position:absolute;left:22px;top:4px;font-size:11px;white-space:nowrap">E:\WINDOWS\syste...</span></div>
<div class="bt" style="left:1339px;width:139px"><svg style="position:absolute;left:2px;top:2px" width="16" height="16" viewBox="0 0 16 16"><rect x="0" y="2" width="16" height="12" fill="#10204a"/><rect x="1" y="5" width="14" height="8" fill="#000"/><text x="2" y="11" font-size="6" fill="#fff" font-family="Liberation Mono">C:\</text></svg><span style="position:absolute;left:22px;top:4px;font-size:11px;white-space:nowrap">E:\WINDOWS\syste...</span></div>
<div style="position:absolute;left:1487px;top:1025px;width:1px;height:22px;background:#808080;border-right:1px solid #fff"></div>
<div style="position:absolute;left:1491px;top:1026px;width:2px;height:20px;border-left:1px solid #fff;border-right:1px solid #808080"></div>
<div style="position:absolute;left:1500px;top:1030px;width:17px;height:16px;background:#0a246a;color:#fff;font-size:11px;line-height:16px;text-align:center">RU</div>
<div style="position:absolute;left:1520px;top:1026px;width:1px;height:20px;background:#808080;border-right:1px solid #fff"></div>
<div style="position:absolute;left:1526px;top:1025px;width:150px;height:22px;border-top:1px solid #808080;border-left:1px solid #808080;border-right:1px solid #fff;border-bottom:1px solid #fff"></div>
<svg style="position:absolute;left:1530px;top:1029px" width="16" height="16" viewBox="0 0 16 16"><path d="M8 0l2 3 3-1 0 3 3 1-2 3 2 2-3 1 0 3-3-1-2 3-2-3-3 1 0-3-3-1 2-3-2-2 3-1 0-3 3 1z" fill="#58a8c8"/><circle cx="8" cy="8" r="3.5" fill="#d0f0f8"/><path d="M4 12l3-3M12 12l-3-3" stroke="#2a6888" stroke-width="1"/></svg>
<svg style="position:absolute;left:1548px;top:1029px" width="16" height="16" viewBox="0 0 16 16"><path d="M1 4l5-3 4 3 5-2v12H1z" fill="#202020"/><circle cx="8" cy="7" r="3.5" fill="#c02848"/><path d="M1 3l4 4M15 2l-4 5" stroke="#f0c820" stroke-width="2"/><rect x="3" y="11" width="10" height="3" fill="#e8e8e8"/></svg>
<svg style="position:absolute;left:1566px;top:1029px" width="16" height="16" viewBox="0 0 16 16"><rect x="1" y="1" width="14" height="14" fill="#f8f0f0"/><path d="M3 3l4 10 7-11" stroke="#e01010" stroke-width="3.2" fill="none"/><rect x="10" y="10" width="5" height="5" fill="#000"/></svg>
<svg style="position:absolute;left:1584px;top:1029px" width="16" height="16" viewBox="0 0 16 16"><circle cx="8" cy="8" r="7" fill="#d8b060"/><circle cx="7" cy="7" r="4.5" fill="#f8e0a0"/><path d="M4 10c2 2 5 2 7 0" stroke="#806020" stroke-width="1" fill="none"/><path d="M11 1l4 4" stroke="#e0c080" stroke-width="2"/></svg>
<svg style="position:absolute;left:1601px;top:1029px" width="16" height="16" viewBox="0 0 16 16"><path d="M8 0l2 2.5 3-.5 .5 3 2.5 2-2 2.5.5 3-3 .5-1.5 3-2.5-2-2.5 2-1.5-3-3-.5.5-3-2-2.5L2.5 5l.5-3 3 .5z" fill="#30a820"/><circle cx="8" cy="8" r="4" fill="#e0e020"/><circle cx="6.5" cy="7.5" r="0.8" fill="#000"/><circle cx="9.5" cy="7.5" r="0.8" fill="#000"/></svg>
<svg style="position:absolute;left:1621px;top:1029px" width="16" height="16" viewBox="0 0 16 16"><path d="M1 5h4l6-4v14l-6-4H1z" fill="#d04010"/><path d="M11 1v14" stroke="#602010" stroke-width="1"/><path d="M12 4c2 2 2 6 0 8" stroke="#803010" stroke-width="1.5" fill="none"/><path d="M2 6h3v4H2z" fill="#f08050"/></svg>
<div style="position:absolute;left:1641px;top:1031px;font-size:11.5px;color:#000">16:51</div>
</div></body></html>
